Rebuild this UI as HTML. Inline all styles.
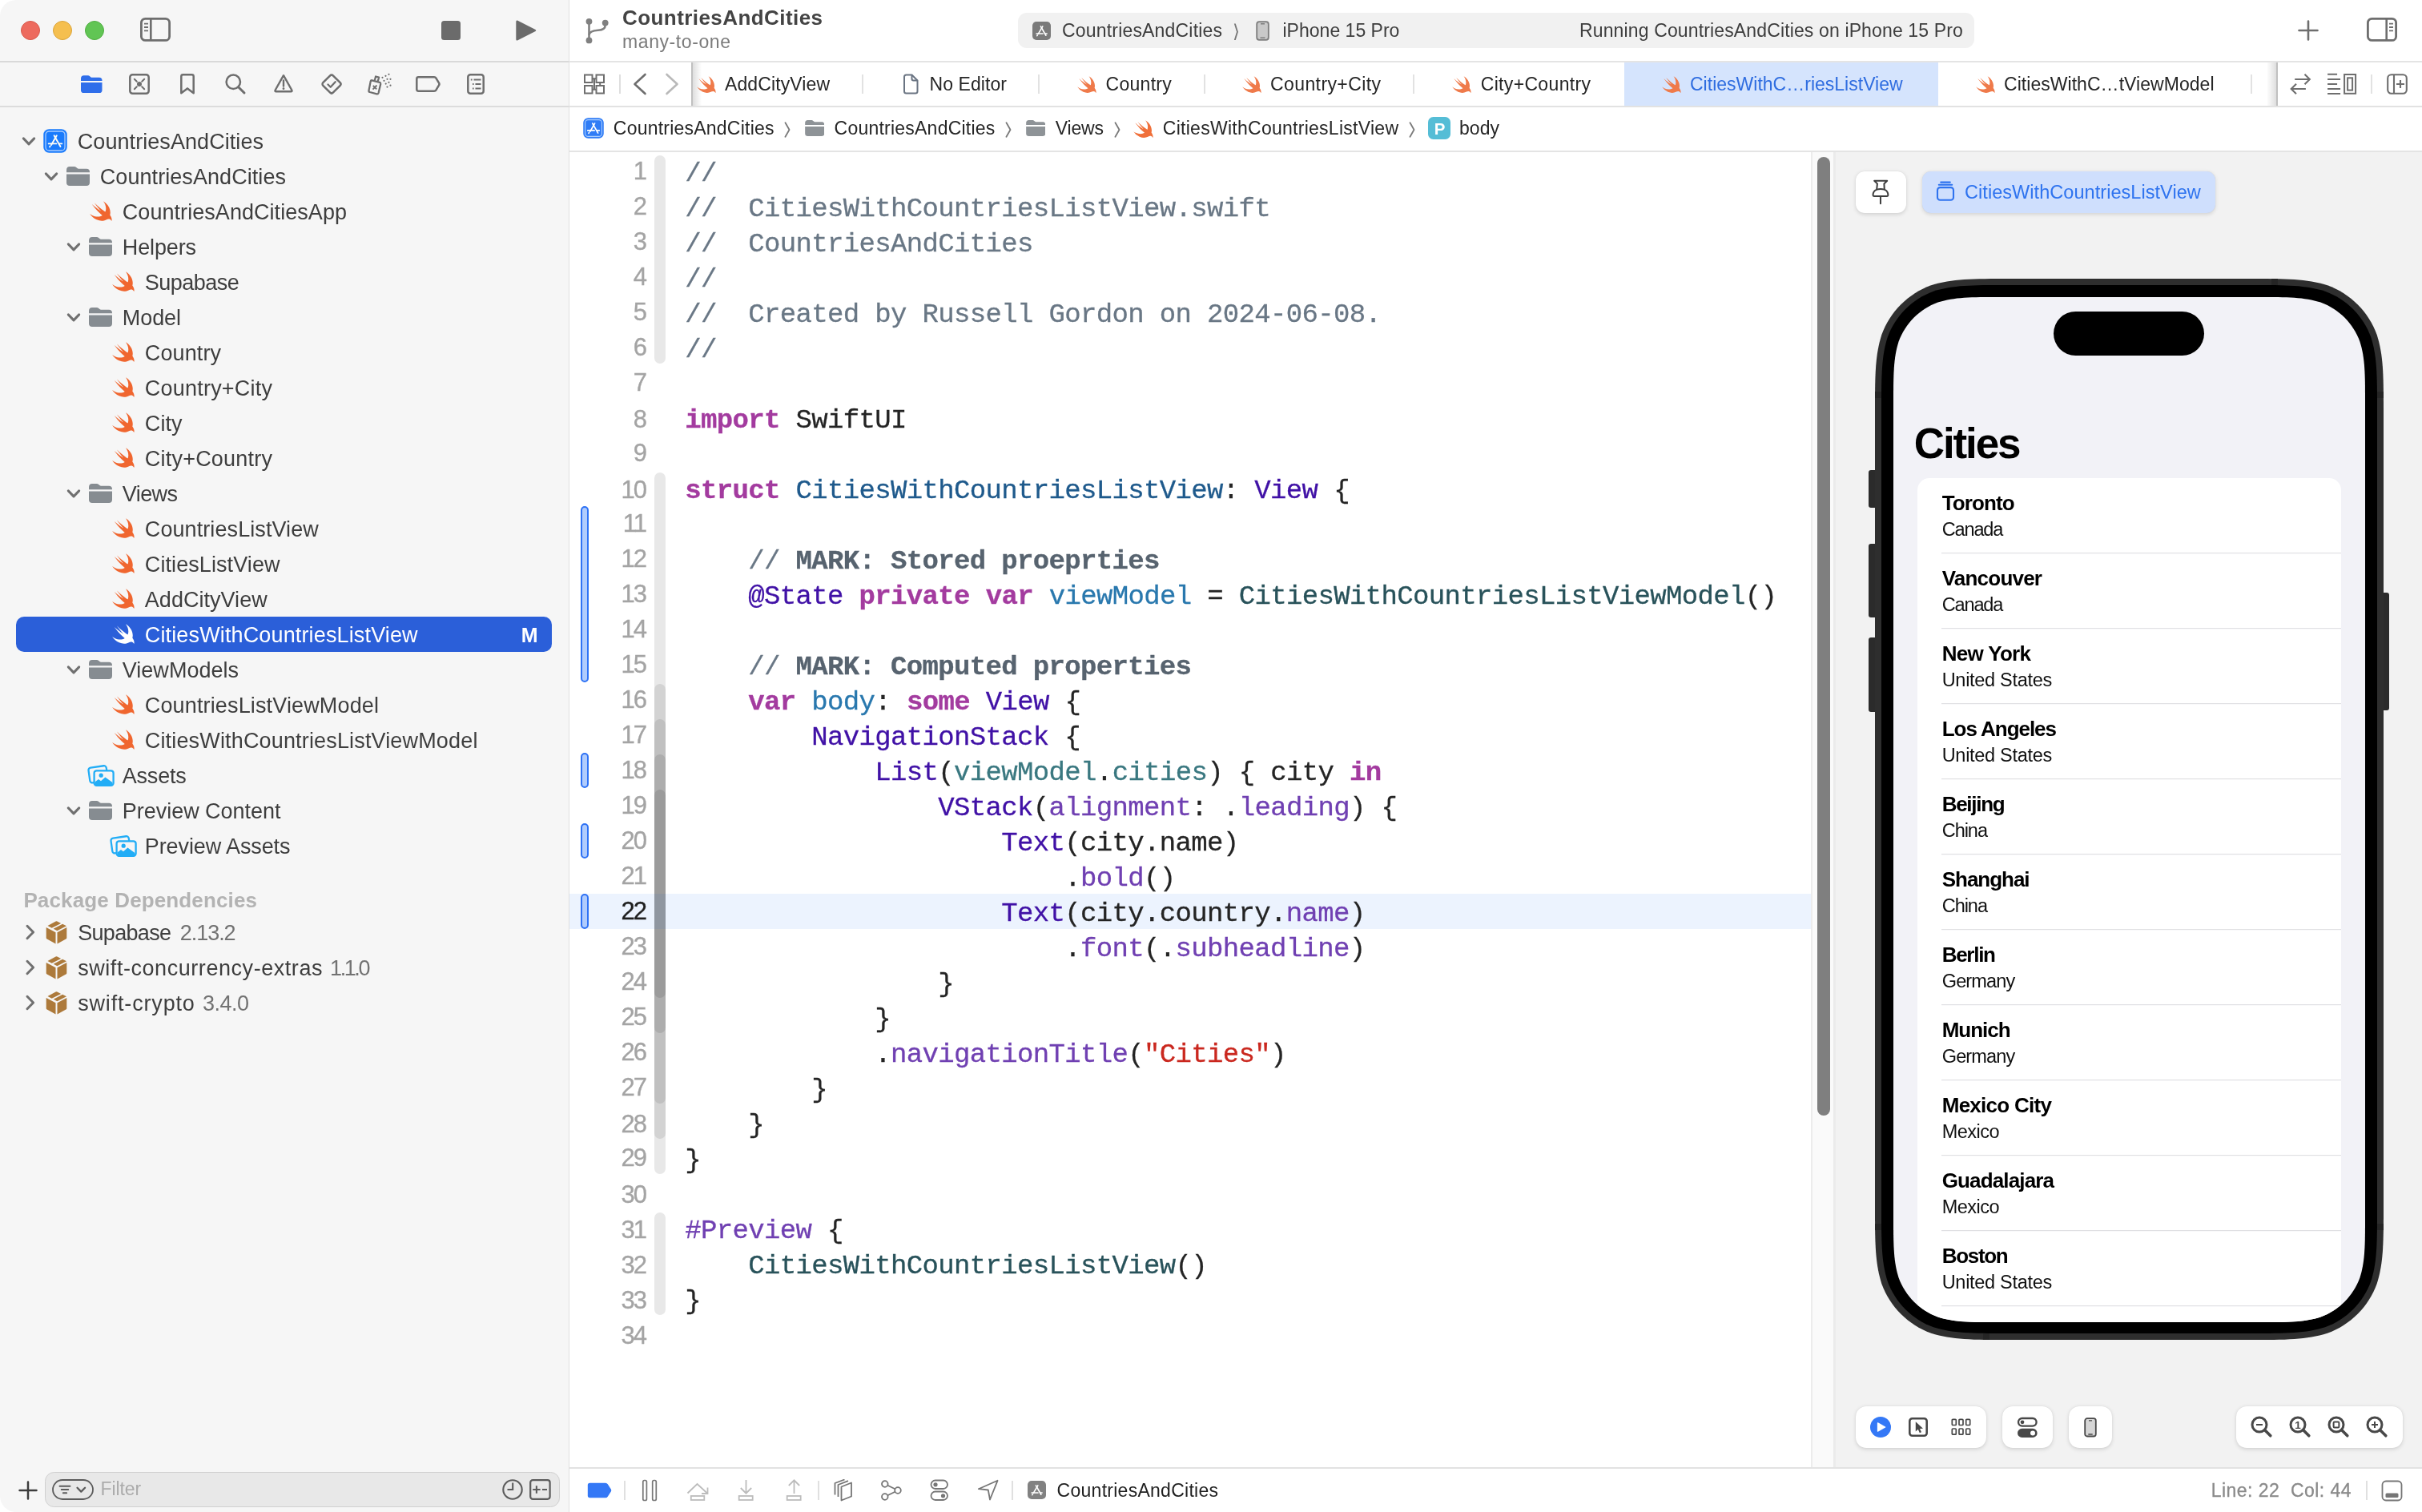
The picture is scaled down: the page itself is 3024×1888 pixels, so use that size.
<!DOCTYPE html>
<html lang="en"><head><meta charset="utf-8"><title>CountriesAndCities — CitiesWithCountriesListView.swift</title>
<style>
html,body{margin:0;padding:0;background:#fff;}
body{width:3024px;height:1888px;overflow:hidden;position:relative;font-family:"Liberation Sans",sans-serif;}
#app{position:absolute;left:0;top:0;width:3024px;height:1888px;overflow:hidden;will-change:transform;}
#app div,#app span,#app svg{position:absolute;box-sizing:border-box;}
#app span{white-space:pre;display:block;}
</style></head><body><div id="app">
<div style="left:0px;top:0px;width:711px;height:1888px;background:#f6f6f6;border-radius:20px 0 0 20px;"></div>
<div style="left:710px;top:0px;width:1px;height:1888px;background:#dfdfdf;"></div>
<div style="left:711px;top:0px;width:2313px;height:1888px;background:#ffffff;"></div>
<div style="left:0px;top:76px;width:710px;height:2px;background:#d9d9d9;"></div>
<div style="left:711px;top:76px;width:2313px;height:2px;background:#e4e4e4;"></div>
<div style="left:0px;top:132px;width:710px;height:2px;background:#dcdcdc;"></div>
<div style="left:26px;top:26px;width:24px;height:24px;background:#ed6a5e;border-radius:50%;border:1px solid #d8594c;"></div>
<div style="left:66px;top:26px;width:24px;height:24px;background:#f5bf4f;border-radius:50%;border:1px solid #dba43a;"></div>
<div style="left:106px;top:26px;width:24px;height:24px;background:#61c554;border-radius:50%;border:1px solid #4fae41;"></div>
<svg style="left:174px;top:21px;" width="40" height="32" viewBox="0 0 40 32"><rect x="2.4" y="2.4" width="35.2" height="27" rx="5" fill="none" stroke="#6e6e6e" stroke-width="2.8"/><path d="M14.3 2.4v27" stroke="#6e6e6e" stroke-width="2.6"/><path d="M6 8.6h5M6 13h5M6 17.4h5" stroke="#6e6e6e" stroke-width="1.8"/></svg>
<div style="left:551px;top:26px;width:24px;height:24px;background:#6b6b6b;border-radius:3.5px;"></div>
<svg style="left:642px;top:22px;" width="32" height="32" viewBox="0 0 32 32"><path d="M4 3.6 L26.6 15 Q28 16 26.6 17 L4 28.4 Q2.3 29 2.3 27 L2.3 5 Q2.3 3 4 3.6Z" fill="#6b6b6b"/></svg>
<svg style="left:729px;top:20px;" width="34" height="38" viewBox="0 0 34 38"><g fill="none" stroke="#808080" stroke-width="2.600"><path d="M6.500 7v24"/><path d="M26.7 9v2.5c0 5-4 6-9 6.3-6 .4-11 1.3-11.2 6"/></g><circle cx="6.5" cy="6.8" r="3.9" fill="#808080"/><circle cx="26.7" cy="8.6" r="3.9" fill="#808080"/><circle cx="6.5" cy="30.4" r="3.9" fill="#808080"/></svg>
<span style="left:777.00px;top:9.00px;font-size:26px;line-height:26px;color:#444444;letter-spacing:0.430px;font-weight:700;">CountriesAndCities</span>
<span style="left:777.00px;top:41.00px;font-size:23px;line-height:23px;color:#7b7b7b;letter-spacing:0.588px;">many-to-one</span>
<div style="left:1271px;top:16px;width:1194px;height:44px;background:#f1f1f1;border-radius:11px;"></div>
<svg style="left:1289px;top:27px;" width="23" height="23" viewBox="0 0 24 24"><rect width="24" height="24" rx="5.28" fill="#7a7a7a"/><g stroke="#ffffff" stroke-width="1.7" stroke-linecap="round" fill="none"><path d="M13.4 6.2 L7.6 16"/><path d="M10.8 6.2 L17.6 18"/><path d="M5.3 15.6h8.3M16.3 15.6h2.6"/><path d="M6.6 17.6l-.5 .9"/></g></svg>
<span style="left:1326.00px;top:27.00px;font-size:23px;line-height:23px;color:#3d3d3d;letter-spacing:0.184px;">CountriesAndCities</span>
<span style="left:1539.00px;top:28.00px;font-size:23px;line-height:23px;color:#777777;">⟩</span>
<svg style="left:1568px;top:26px;" width="17" height="25" viewBox="0 0 17 25"><rect x="1.2" y="1.2" width="14.6" height="22.6" rx="3" fill="#c9c9c9" stroke="#7d7d7d" stroke-width="1.8"/><path d="M6 3.7h5M5.5 21.3h6" stroke="#7d7d7d" stroke-width="1.5"/></svg>
<span style="left:1601.50px;top:27.00px;font-size:23px;line-height:23px;color:#3d3d3d;letter-spacing:0.011px;">iPhone 15 Pro</span>
<span style="left:1972.00px;top:27.00px;font-size:23px;line-height:23px;color:#3d3d3d;letter-spacing:0.136px;">Running CountriesAndCities on iPhone 15 Pro</span>
<svg style="left:2868px;top:24px;" width="28" height="28" viewBox="0 0 28 28"><path d="M14 2.5v23M2.5 14h23" stroke="#6e6e6e" stroke-width="2.6" stroke-linecap="round"/></svg>
<svg style="left:2954px;top:21px;" width="40" height="32" viewBox="0 0 40 32"><rect x="2.4" y="2.4" width="35.2" height="27" rx="5" fill="none" stroke="#6e6e6e" stroke-width="2.8"/><path d="M25.7 2.4v27" stroke="#6e6e6e" stroke-width="2.6"/><path d="M29 8.6h5M29 13h5M29 17.4h5" stroke="#6e6e6e" stroke-width="1.8"/></svg>
<svg style="left:101px;top:93.5px;" width="26.5" height="22.5" viewBox="0 0 29 24"><path fill="#2f6eea" d="M0 4.2C0 1.6 1.5 0 4 0h5.2c1.3 0 2 .3 3 1.1l1.2 1c.7.5 1.2.7 2.2.7H25c2.6 0 4 1.500 4 4V7.300H0Z"/><path fill="#2f6eea" d="M0 9.6h29V20c0 2.600-1.500 4-4 4H4c-2.500 0-4-1.400-4-4Z"/></svg>
<svg style="left:160px;top:91px;" width="28" height="28" viewBox="0 0 28 28"><rect x="2.3" y="2.3" width="23.400" height="23.400" rx="3.2" fill="none" stroke="#6e6e6e" stroke-width="2.5"/><circle cx="14" cy="14" r="3" fill="#6e6e6e"/><path d="M7.800 7.800l3 3M20.200 7.800l-3 3M7.800 20.200l3-3M20.200 20.200l-3-3" stroke="#6e6e6e" stroke-width="2" stroke-linecap="round"/></svg>
<svg style="left:224px;top:91px;" width="20" height="28" viewBox="0 0 20 28"><path d="M2.300 4.500q0-2.200 2.200-2.200h11q2.200 0 2.200 2.200v20.700L10 19.400 2.300 25.200Z" fill="none" stroke="#6e6e6e" stroke-width="2.500" stroke-linejoin="round"/></svg>
<svg style="left:280px;top:91px;" width="28" height="28" viewBox="0 0 28 28"><circle cx="11.300" cy="11.300" r="8.700" fill="none" stroke="#6e6e6e" stroke-width="2.500"/><path d="M17.700 17.700l7.300 7.300" stroke="#6e6e6e" stroke-width="3" stroke-linecap="round"/></svg>
<svg style="left:341px;top:91px;" width="26" height="26" viewBox="0 0 26 26"><path d="M13 3.200 23.300 21.500q.8 1.800-1 1.800H3.700q-1.800 0-1-1.800Z" fill="none" stroke="#6e6e6e" stroke-width="2.400" stroke-linejoin="round"/><path d="M13 9.500v7" stroke="#6e6e6e" stroke-width="2.400" stroke-linecap="round"/><circle cx="13" cy="19.700" r="1.400" fill="#6e6e6e"/></svg>
<svg style="left:400px;top:91px;" width="28" height="28" viewBox="0 0 28 28"><rect x="5.200" y="5.200" width="17.600" height="17.600" rx="2.500" transform="rotate(45 14 14)" fill="none" stroke="#6e6e6e" stroke-width="2.500"/><path d="M9.500 14.500l3.200 3.200 6-6.500" fill="none" stroke="#6e6e6e" stroke-width="2.300" stroke-linecap="round" stroke-linejoin="round"/></svg>
<svg style="left:458px;top:90px;" width="32" height="30" viewBox="0 0 32 30"><g fill="none" stroke="#6e6e6e" stroke-width="2.300" stroke-linejoin="round"><path d="M6.500 10.300l9.500 2.500q1.500.6 1.200 2.200L14.600 26q-.5 1.600-2.100 1.300L3.700 25q-1.500-.5-1.200-2.100L4.700 11.600q.4-1.500 1.800-1.300Z"/><path d="M9.800 10.500l1.300-5 4 1-1.300 5"/><path d="M7.800 16.800l4.400 4.600M12.500 16.500l-5 5.200" stroke-width="1.900"/></g><g fill="#6e6e6e"><circle cx="19.500" cy="6.800" r="1.100"/><circle cx="23.500" cy="4.800" r="1.100"/><circle cx="27.500" cy="2.800" r="1.100"/><circle cx="21.500" cy="10.800" r="1.100"/><circle cx="25.500" cy="8.800" r="1.100"/><circle cx="29.500" cy="8.800" r="1.100"/><circle cx="23.700" cy="14.600" r="1.100"/><circle cx="27.500" cy="12.800" r="1.100"/><circle cx="25.500" cy="18.600" r="1.100"/><circle cx="29.500" cy="16.700" r="1.100"/></g></svg>
<svg style="left:518px;top:94px;" width="32" height="22" viewBox="0 0 32 22"><path d="M4.500 2.300h19.500q1.600 0 2.600 1.500l3.600 6q.6 1.200 0 2.400l-3.600 6q-1 1.500-2.600 1.500H4.500q-2.200 0-2.200-2.200v-13q0-2.200 2.200-2.200Z" fill="none" stroke="#6e6e6e" stroke-width="2.500" stroke-linejoin="round"/></svg>
<svg style="left:582px;top:91px;" width="24" height="28" viewBox="0 0 24 28"><rect x="2.300" y="2.300" width="19.400" height="23.400" rx="3" fill="none" stroke="#6e6e6e" stroke-width="2.500"/><path d="M9.500 8.500h9M11.500 14h7M11.500 19.500h7" stroke="#6e6e6e" stroke-width="2.100"/><path d="M5.800 8.500h1.800M8 14h1.600M8 19.500h1.600" stroke="#6e6e6e" stroke-width="2.100"/></svg>
<svg style="left:26px;top:169.8px;" width="20" height="14" viewBox="0 0 20 14"><path d="M3.300 2.900 10 9.900 16.700 2.900" fill="none" stroke="#707070" stroke-width="3" stroke-linecap="round" stroke-linejoin="round"/></svg>
<svg style="left:54px;top:161px;" width="30" height="30" viewBox="0 0 30 30"><rect x=".3" y=".3" width="29.400" height="29.400" rx="7" fill="#1a7bfc"/><rect x="3" y="3" width="24" height="24" rx="4.300" fill="none" stroke="#a9cdfe" stroke-width="1.300"/><g stroke="#fffdf5" stroke-width="1.900" stroke-linecap="round" fill="none"><path d="M16.800 8.200 10 20"/><path d="M13.600 8.200 21.500 22"/><path d="M6.700 18.400h9.600M20 18.400h3.300"/><path d="M8.600 21.500l-.5.900"/></g></svg>
<span style="left:96.80px;top:164.00px;font-size:27px;line-height:27px;color:#3e3e3e;letter-spacing:0.064px;">CountriesAndCities</span>
<svg style="left:54px;top:213.8px;" width="20" height="14" viewBox="0 0 20 14"><path d="M3.300 2.900 10 9.900 16.700 2.900" fill="none" stroke="#707070" stroke-width="3" stroke-linecap="round" stroke-linejoin="round"/></svg>
<svg style="left:83px;top:208px;" width="29" height="24" viewBox="0 0 29 24"><path fill="#868c91" d="M0 4.2C0 1.6 1.5 0 4 0h5.2c1.3 0 2 .3 3 1.1l1.2 1c.7.5 1.2.7 2.2.7H25c2.6 0 4 1.500 4 4V7.300H0Z"/><path fill="#868c91" d="M0 9.6h29V20c0 2.600-1.500 4-4 4H4c-2.500 0-4-1.400-4-4Z"/></svg>
<span style="left:124.80px;top:208.00px;font-size:27px;line-height:27px;color:#3e3e3e;letter-spacing:0.064px;">CountriesAndCities</span>
<svg style="left:111.5px;top:250.5px;" width="28" height="25.5" viewBox="2.3 3.3 18.5 16.7"><path fill="#f0662f" d="M13.543 3.41c4.114 2.47 6.545 7.162 5.549 11.131-.024.093-.05.181-.076.272l.002.001c2.062 2.538 1.5 5.258 1.236 4.745-1.072-2.086-3.066-1.568-4.088-1.043a6.803 6.803 0 0 1-.281.158l-.02.012-.002.002c-2.115 1.123-4.957 1.205-7.812-.022a12.568 12.568 0 0 1-5.64-4.838c.649.48 1.35.902 2.097 1.252 3.019 1.414 6.051 1.311 8.197-.002C9.651 12.73 7.101 9.67 5.146 7.191a10.628 10.628 0 0 1-1.005-1.384c2.34 2.142 6.038 4.83 7.365 5.576C8.69 8.408 6.208 4.743 6.324 4.86c4.436 4.47 8.528 6.996 8.528 6.996.154.085.27.154.36.213.085-.215.16-.437.224-.668.708-2.588-.09-5.548-1.893-7.992z"/></svg>
<span style="left:152.80px;top:252.00px;font-size:27px;line-height:27px;color:#3e3e3e;letter-spacing:0.052px;">CountriesAndCitiesApp</span>
<svg style="left:82px;top:301.8px;" width="20" height="14" viewBox="0 0 20 14"><path d="M3.300 2.900 10 9.900 16.700 2.900" fill="none" stroke="#707070" stroke-width="3" stroke-linecap="round" stroke-linejoin="round"/></svg>
<svg style="left:111px;top:296px;" width="29" height="24" viewBox="0 0 29 24"><path fill="#868c91" d="M0 4.2C0 1.6 1.5 0 4 0h5.2c1.3 0 2 .3 3 1.1l1.2 1c.7.5 1.2.7 2.2.7H25c2.6 0 4 1.500 4 4V7.300H0Z"/><path fill="#868c91" d="M0 9.6h29V20c0 2.600-1.500 4-4 4H4c-2.500 0-4-1.400-4-4Z"/></svg>
<span style="left:152.80px;top:296.00px;font-size:27px;line-height:27px;color:#3e3e3e;letter-spacing:-0.140px;">Helpers</span>
<svg style="left:139.5px;top:338.5px;" width="28" height="25.5" viewBox="2.3 3.3 18.5 16.7"><path fill="#f0662f" d="M13.543 3.41c4.114 2.47 6.545 7.162 5.549 11.131-.024.093-.05.181-.076.272l.002.001c2.062 2.538 1.5 5.258 1.236 4.745-1.072-2.086-3.066-1.568-4.088-1.043a6.803 6.803 0 0 1-.281.158l-.02.012-.002.002c-2.115 1.123-4.957 1.205-7.812-.022a12.568 12.568 0 0 1-5.64-4.838c.649.48 1.35.902 2.097 1.252 3.019 1.414 6.051 1.311 8.197-.002C9.651 12.73 7.101 9.67 5.146 7.191a10.628 10.628 0 0 1-1.005-1.384c2.34 2.142 6.038 4.83 7.365 5.576C8.69 8.408 6.208 4.743 6.324 4.86c4.436 4.47 8.528 6.996 8.528 6.996.154.085.27.154.36.213.085-.215.16-.437.224-.668.708-2.588-.09-5.548-1.893-7.992z"/></svg>
<span style="left:180.80px;top:340.00px;font-size:27px;line-height:27px;color:#3e3e3e;letter-spacing:-0.529px;">Supabase</span>
<svg style="left:82px;top:389.8px;" width="20" height="14" viewBox="0 0 20 14"><path d="M3.300 2.900 10 9.900 16.700 2.900" fill="none" stroke="#707070" stroke-width="3" stroke-linecap="round" stroke-linejoin="round"/></svg>
<svg style="left:111px;top:384px;" width="29" height="24" viewBox="0 0 29 24"><path fill="#868c91" d="M0 4.2C0 1.6 1.5 0 4 0h5.2c1.3 0 2 .3 3 1.1l1.2 1c.7.5 1.2.7 2.2.7H25c2.6 0 4 1.500 4 4V7.300H0Z"/><path fill="#868c91" d="M0 9.6h29V20c0 2.600-1.500 4-4 4H4c-2.500 0-4-1.400-4-4Z"/></svg>
<span style="left:152.80px;top:384.00px;font-size:27px;line-height:27px;color:#3e3e3e;letter-spacing:-0.085px;">Model</span>
<svg style="left:139.5px;top:426.5px;" width="28" height="25.5" viewBox="2.3 3.3 18.5 16.7"><path fill="#f0662f" d="M13.543 3.41c4.114 2.47 6.545 7.162 5.549 11.131-.024.093-.05.181-.076.272l.002.001c2.062 2.538 1.5 5.258 1.236 4.745-1.072-2.086-3.066-1.568-4.088-1.043a6.803 6.803 0 0 1-.281.158l-.02.012-.002.002c-2.115 1.123-4.957 1.205-7.812-.022a12.568 12.568 0 0 1-5.64-4.838c.649.48 1.35.902 2.097 1.252 3.019 1.414 6.051 1.311 8.197-.002C9.651 12.73 7.101 9.67 5.146 7.191a10.628 10.628 0 0 1-1.005-1.384c2.34 2.142 6.038 4.83 7.365 5.576C8.69 8.408 6.208 4.743 6.324 4.86c4.436 4.47 8.528 6.996 8.528 6.996.154.085.27.154.36.213.085-.215.16-.437.224-.668.708-2.588-.09-5.548-1.893-7.992z"/></svg>
<span style="left:180.80px;top:428.00px;font-size:27px;line-height:27px;color:#3e3e3e;letter-spacing:0.110px;">Country</span>
<svg style="left:139.5px;top:470.5px;" width="28" height="25.5" viewBox="2.3 3.3 18.5 16.7"><path fill="#f0662f" d="M13.543 3.41c4.114 2.47 6.545 7.162 5.549 11.131-.024.093-.05.181-.076.272l.002.001c2.062 2.538 1.5 5.258 1.236 4.745-1.072-2.086-3.066-1.568-4.088-1.043a6.803 6.803 0 0 1-.281.158l-.02.012-.002.002c-2.115 1.123-4.957 1.205-7.812-.022a12.568 12.568 0 0 1-5.64-4.838c.649.48 1.35.902 2.097 1.252 3.019 1.414 6.051 1.311 8.197-.002C9.651 12.73 7.101 9.67 5.146 7.191a10.628 10.628 0 0 1-1.005-1.384c2.34 2.142 6.038 4.83 7.365 5.576C8.69 8.408 6.208 4.743 6.324 4.86c4.436 4.47 8.528 6.996 8.528 6.996.154.085.27.154.36.213.085-.215.16-.437.224-.668.708-2.588-.09-5.548-1.893-7.992z"/></svg>
<span style="left:180.80px;top:472.00px;font-size:27px;line-height:27px;color:#3e3e3e;letter-spacing:0.218px;">Country+City</span>
<svg style="left:139.5px;top:514.5px;" width="28" height="25.5" viewBox="2.3 3.3 18.5 16.7"><path fill="#f0662f" d="M13.543 3.41c4.114 2.47 6.545 7.162 5.549 11.131-.024.093-.05.181-.076.272l.002.001c2.062 2.538 1.5 5.258 1.236 4.745-1.072-2.086-3.066-1.568-4.088-1.043a6.803 6.803 0 0 1-.281.158l-.02.012-.002.002c-2.115 1.123-4.957 1.205-7.812-.022a12.568 12.568 0 0 1-5.64-4.838c.649.48 1.35.902 2.097 1.252 3.019 1.414 6.051 1.311 8.197-.002C9.651 12.73 7.101 9.67 5.146 7.191a10.628 10.628 0 0 1-1.005-1.384c2.34 2.142 6.038 4.83 7.365 5.576C8.69 8.408 6.208 4.743 6.324 4.86c4.436 4.47 8.528 6.996 8.528 6.996.154.085.27.154.36.213.085-.215.16-.437.224-.668.708-2.588-.09-5.548-1.893-7.992z"/></svg>
<span style="left:180.80px;top:516.00px;font-size:27px;line-height:27px;color:#3e3e3e;letter-spacing:0.100px;">City</span>
<svg style="left:139.5px;top:558.5px;" width="28" height="25.5" viewBox="2.3 3.3 18.5 16.7"><path fill="#f0662f" d="M13.543 3.41c4.114 2.47 6.545 7.162 5.549 11.131-.024.093-.05.181-.076.272l.002.001c2.062 2.538 1.5 5.258 1.236 4.745-1.072-2.086-3.066-1.568-4.088-1.043a6.803 6.803 0 0 1-.281.158l-.02.012-.002.002c-2.115 1.123-4.957 1.205-7.812-.022a12.568 12.568 0 0 1-5.64-4.838c.649.48 1.35.902 2.097 1.252 3.019 1.414 6.051 1.311 8.197-.002C9.651 12.73 7.101 9.67 5.146 7.191a10.628 10.628 0 0 1-1.005-1.384c2.34 2.142 6.038 4.83 7.365 5.576C8.69 8.408 6.208 4.743 6.324 4.86c4.436 4.47 8.528 6.996 8.528 6.996.154.085.27.154.36.213.085-.215.16-.437.224-.668.708-2.588-.09-5.548-1.893-7.992z"/></svg>
<span style="left:180.80px;top:560.00px;font-size:27px;line-height:27px;color:#3e3e3e;letter-spacing:0.218px;">City+Country</span>
<svg style="left:82px;top:609.8px;" width="20" height="14" viewBox="0 0 20 14"><path d="M3.300 2.900 10 9.900 16.700 2.900" fill="none" stroke="#707070" stroke-width="3" stroke-linecap="round" stroke-linejoin="round"/></svg>
<svg style="left:111px;top:604px;" width="29" height="24" viewBox="0 0 29 24"><path fill="#868c91" d="M0 4.2C0 1.6 1.5 0 4 0h5.2c1.3 0 2 .3 3 1.1l1.2 1c.7.5 1.2.7 2.2.7H25c2.6 0 4 1.500 4 4V7.300H0Z"/><path fill="#868c91" d="M0 9.6h29V20c0 2.600-1.500 4-4 4H4c-2.500 0-4-1.400-4-4Z"/></svg>
<span style="left:152.80px;top:604.00px;font-size:27px;line-height:27px;color:#3e3e3e;letter-spacing:-0.584px;">Views</span>
<svg style="left:139.5px;top:646.5px;" width="28" height="25.5" viewBox="2.3 3.3 18.5 16.7"><path fill="#f0662f" d="M13.543 3.41c4.114 2.47 6.545 7.162 5.549 11.131-.024.093-.05.181-.076.272l.002.001c2.062 2.538 1.5 5.258 1.236 4.745-1.072-2.086-3.066-1.568-4.088-1.043a6.803 6.803 0 0 1-.281.158l-.02.012-.002.002c-2.115 1.123-4.957 1.205-7.812-.022a12.568 12.568 0 0 1-5.64-4.838c.649.48 1.35.902 2.097 1.252 3.019 1.414 6.051 1.311 8.197-.002C9.651 12.73 7.101 9.67 5.146 7.191a10.628 10.628 0 0 1-1.005-1.384c2.34 2.142 6.038 4.83 7.365 5.576C8.69 8.408 6.208 4.743 6.324 4.86c4.436 4.47 8.528 6.996 8.528 6.996.154.085.27.154.36.213.085-.215.16-.437.224-.668.708-2.588-.09-5.548-1.893-7.992z"/></svg>
<span style="left:180.80px;top:648.00px;font-size:27px;line-height:27px;color:#3e3e3e;letter-spacing:0.087px;">CountriesListView</span>
<svg style="left:139.5px;top:690.5px;" width="28" height="25.5" viewBox="2.3 3.3 18.5 16.7"><path fill="#f0662f" d="M13.543 3.41c4.114 2.47 6.545 7.162 5.549 11.131-.024.093-.05.181-.076.272l.002.001c2.062 2.538 1.5 5.258 1.236 4.745-1.072-2.086-3.066-1.568-4.088-1.043a6.803 6.803 0 0 1-.281.158l-.02.012-.002.002c-2.115 1.123-4.957 1.205-7.812-.022a12.568 12.568 0 0 1-5.64-4.838c.649.48 1.35.902 2.097 1.252 3.019 1.414 6.051 1.311 8.197-.002C9.651 12.73 7.101 9.67 5.146 7.191a10.628 10.628 0 0 1-1.005-1.384c2.34 2.142 6.038 4.83 7.365 5.576C8.69 8.408 6.208 4.743 6.324 4.86c4.436 4.47 8.528 6.996 8.528 6.996.154.085.27.154.36.213.085-.215.16-.437.224-.668.708-2.588-.09-5.548-1.893-7.992z"/></svg>
<span style="left:180.80px;top:692.00px;font-size:27px;line-height:27px;color:#3e3e3e;letter-spacing:0.087px;">CitiesListView</span>
<svg style="left:139.5px;top:734.5px;" width="28" height="25.5" viewBox="2.3 3.3 18.5 16.7"><path fill="#f0662f" d="M13.543 3.41c4.114 2.47 6.545 7.162 5.549 11.131-.024.093-.05.181-.076.272l.002.001c2.062 2.538 1.5 5.258 1.236 4.745-1.072-2.086-3.066-1.568-4.088-1.043a6.803 6.803 0 0 1-.281.158l-.02.012-.002.002c-2.115 1.123-4.957 1.205-7.812-.022a12.568 12.568 0 0 1-5.64-4.838c.649.48 1.35.902 2.097 1.252 3.019 1.414 6.051 1.311 8.197-.002C9.651 12.73 7.101 9.67 5.146 7.191a10.628 10.628 0 0 1-1.005-1.384c2.34 2.142 6.038 4.83 7.365 5.576C8.69 8.408 6.208 4.743 6.324 4.86c4.436 4.47 8.528 6.996 8.528 6.996.154.085.27.154.36.213.085-.215.16-.437.224-.668.708-2.588-.09-5.548-1.893-7.992z"/></svg>
<span style="left:180.80px;top:736.00px;font-size:27px;line-height:27px;color:#3e3e3e;letter-spacing:0.033px;">AddCityView</span>
<div style="left:20px;top:770px;width:669px;height:44px;background:#2b5fd9;border-radius:10px;"></div>
<svg style="left:139.5px;top:778.5px;" width="28" height="25.5" viewBox="2.3 3.3 18.5 16.7"><path fill="#ffffff" d="M13.543 3.41c4.114 2.47 6.545 7.162 5.549 11.131-.024.093-.05.181-.076.272l.002.001c2.062 2.538 1.5 5.258 1.236 4.745-1.072-2.086-3.066-1.568-4.088-1.043a6.803 6.803 0 0 1-.281.158l-.02.012-.002.002c-2.115 1.123-4.957 1.205-7.812-.022a12.568 12.568 0 0 1-5.64-4.838c.649.48 1.35.902 2.097 1.252 3.019 1.414 6.051 1.311 8.197-.002C9.651 12.73 7.101 9.67 5.146 7.191a10.628 10.628 0 0 1-1.005-1.384c2.34 2.142 6.038 4.83 7.365 5.576C8.69 8.408 6.208 4.743 6.324 4.86c4.436 4.47 8.528 6.996 8.528 6.996.154.085.27.154.36.213.085-.215.16-.437.224-.668.708-2.588-.09-5.548-1.893-7.992z"/></svg>
<span style="left:180.80px;top:780.00px;font-size:27px;line-height:27px;color:#ffffff;letter-spacing:0.142px;">CitiesWithCountriesListView</span>
<svg style="left:82px;top:829.8px;" width="20" height="14" viewBox="0 0 20 14"><path d="M3.300 2.900 10 9.900 16.700 2.900" fill="none" stroke="#707070" stroke-width="3" stroke-linecap="round" stroke-linejoin="round"/></svg>
<svg style="left:111px;top:824px;" width="29" height="24" viewBox="0 0 29 24"><path fill="#868c91" d="M0 4.2C0 1.6 1.5 0 4 0h5.2c1.3 0 2 .3 3 1.1l1.2 1c.7.5 1.2.7 2.2.7H25c2.6 0 4 1.500 4 4V7.300H0Z"/><path fill="#868c91" d="M0 9.6h29V20c0 2.600-1.500 4-4 4H4c-2.500 0-4-1.400-4-4Z"/></svg>
<span style="left:152.80px;top:824.00px;font-size:27px;line-height:27px;color:#3e3e3e;letter-spacing:0.014px;">ViewModels</span>
<svg style="left:139.5px;top:866.5px;" width="28" height="25.5" viewBox="2.3 3.3 18.5 16.7"><path fill="#f0662f" d="M13.543 3.41c4.114 2.47 6.545 7.162 5.549 11.131-.024.093-.05.181-.076.272l.002.001c2.062 2.538 1.5 5.258 1.236 4.745-1.072-2.086-3.066-1.568-4.088-1.043a6.803 6.803 0 0 1-.281.158l-.02.012-.002.002c-2.115 1.123-4.957 1.205-7.812-.022a12.568 12.568 0 0 1-5.64-4.838c.649.48 1.35.902 2.097 1.252 3.019 1.414 6.051 1.311 8.197-.002C9.651 12.73 7.101 9.67 5.146 7.191a10.628 10.628 0 0 1-1.005-1.384c2.34 2.142 6.038 4.83 7.365 5.576C8.69 8.408 6.208 4.743 6.324 4.86c4.436 4.47 8.528 6.996 8.528 6.996.154.085.27.154.36.213.085-.215.16-.437.224-.668.708-2.588-.09-5.548-1.893-7.992z"/></svg>
<span style="left:180.80px;top:868.00px;font-size:27px;line-height:27px;color:#3e3e3e;letter-spacing:0.145px;">CountriesListViewModel</span>
<svg style="left:139.5px;top:910.5px;" width="28" height="25.5" viewBox="2.3 3.3 18.5 16.7"><path fill="#f0662f" d="M13.543 3.41c4.114 2.47 6.545 7.162 5.549 11.131-.024.093-.05.181-.076.272l.002.001c2.062 2.538 1.5 5.258 1.236 4.745-1.072-2.086-3.066-1.568-4.088-1.043a6.803 6.803 0 0 1-.281.158l-.02.012-.002.002c-2.115 1.123-4.957 1.205-7.812-.022a12.568 12.568 0 0 1-5.64-4.838c.649.48 1.35.902 2.097 1.252 3.019 1.414 6.051 1.311 8.197-.002C9.651 12.73 7.101 9.67 5.146 7.191a10.628 10.628 0 0 1-1.005-1.384c2.34 2.142 6.038 4.83 7.365 5.576C8.69 8.408 6.208 4.743 6.324 4.86c4.436 4.47 8.528 6.996 8.528 6.996.154.085.27.154.36.213.085-.215.16-.437.224-.668.708-2.588-.09-5.548-1.893-7.992z"/></svg>
<span style="left:180.80px;top:912.00px;font-size:27px;line-height:27px;color:#3e3e3e;letter-spacing:0.159px;">CitiesWithCountriesListViewModel</span>
<svg style="left:109px;top:953.5px;" width="34" height="28" viewBox="0 0 34 28"><rect x="2.300" y="3.300" width="22.500" height="19" rx="3" transform="rotate(-8 13.500 12.800)" fill="none" stroke="#22adf6" stroke-width="2.300"/><rect x="8.600" y="8.300" width="24" height="18.500" rx="3" fill="#f6f6f6" stroke="#22adf6" stroke-width="2.300"/><circle cx="17.200" cy="14.200" r="2.600" fill="#22adf6"/><path d="M9.700 22.300l4.300-3.200 3 2.200 5.400-4.700 9 6.500v2q0 1.500-1.500 1.500H11.200q-1.500 0-1.500-1.500Z" fill="#22adf6"/></svg>
<span style="left:152.80px;top:956.00px;font-size:27px;line-height:27px;color:#3e3e3e;letter-spacing:-0.225px;">Assets</span>
<svg style="left:82px;top:1005.8px;" width="20" height="14" viewBox="0 0 20 14"><path d="M3.300 2.900 10 9.900 16.700 2.900" fill="none" stroke="#707070" stroke-width="3" stroke-linecap="round" stroke-linejoin="round"/></svg>
<svg style="left:111px;top:1000px;" width="29" height="24" viewBox="0 0 29 24"><path fill="#868c91" d="M0 4.2C0 1.6 1.5 0 4 0h5.2c1.3 0 2 .3 3 1.1l1.2 1c.7.5 1.2.7 2.2.7H25c2.6 0 4 1.500 4 4V7.300H0Z"/><path fill="#868c91" d="M0 9.6h29V20c0 2.600-1.500 4-4 4H4c-2.500 0-4-1.400-4-4Z"/></svg>
<span style="left:152.80px;top:1000.00px;font-size:27px;line-height:27px;color:#3e3e3e;letter-spacing:-0.028px;">Preview Content</span>
<svg style="left:137px;top:1041.5px;" width="34" height="28" viewBox="0 0 34 28"><rect x="2.300" y="3.300" width="22.500" height="19" rx="3" transform="rotate(-8 13.500 12.800)" fill="none" stroke="#22adf6" stroke-width="2.300"/><rect x="8.600" y="8.300" width="24" height="18.500" rx="3" fill="#f6f6f6" stroke="#22adf6" stroke-width="2.300"/><circle cx="17.200" cy="14.200" r="2.600" fill="#22adf6"/><path d="M9.700 22.300l4.300-3.200 3 2.200 5.400-4.700 9 6.500v2q0 1.500-1.500 1.500H11.200q-1.500 0-1.500-1.500Z" fill="#22adf6"/></svg>
<span style="left:180.80px;top:1044.00px;font-size:27px;line-height:27px;color:#3e3e3e;letter-spacing:-0.105px;">Preview Assets</span>
<span style="left:650.80px;top:781.00px;font-size:25px;line-height:25px;color:#ffffff;font-weight:700;">M</span>
<span style="left:29.40px;top:1111.00px;font-size:26px;line-height:26px;color:#b3b3b3;letter-spacing:0.135px;font-weight:700;">Package Dependencies</span>
<svg style="left:31px;top:1153.5px;" width="14" height="20" viewBox="0 0 14 20"><path d="M3 2.300 10.600 10 3 17.700" fill="none" stroke="#707070" stroke-width="3" stroke-linecap="round" stroke-linejoin="round"/></svg>
<svg style="left:56.5px;top:1149.5px;" width="27" height="29" viewBox="0 0 27 29"><path fill="#ad7a3b" d="M12.600.4q.9-.4 1.800 0L19.200 2.900 7.700 8.700 2.500 6Z"/><path fill="#ad7a3b" d="M21.100 3.800 26 6.300 14.400 12.200 9.700 9.700Z"/><path fill="#ad7a3b" d="M.700 8 12.500 14.200V28.500L1.700 22.600Q.700 22 .700 20.900Z"/><path fill="#ad7a3b" d="M26.300 8 14.500 14.200V28.500L25.300 22.600Q26.300 22 26.300 20.900Z"/></svg>
<span style="left:97.20px;top:1152.00px;font-size:27px;line-height:27px;color:#3e3e3e;letter-spacing:-0.687px;">Supabase</span>
<span style="left:224.80px;top:1152.00px;font-size:27px;line-height:27px;color:#727272;letter-spacing:-1.054px;">2.13.2</span>
<svg style="left:31px;top:1197.5px;" width="14" height="20" viewBox="0 0 14 20"><path d="M3 2.300 10.600 10 3 17.700" fill="none" stroke="#707070" stroke-width="3" stroke-linecap="round" stroke-linejoin="round"/></svg>
<svg style="left:56.5px;top:1193.5px;" width="27" height="29" viewBox="0 0 27 29"><path fill="#ad7a3b" d="M12.600.4q.9-.4 1.800 0L19.200 2.900 7.700 8.700 2.500 6Z"/><path fill="#ad7a3b" d="M21.100 3.800 26 6.300 14.400 12.200 9.700 9.700Z"/><path fill="#ad7a3b" d="M.700 8 12.500 14.200V28.500L1.700 22.600Q.700 22 .700 20.900Z"/><path fill="#ad7a3b" d="M26.300 8 14.500 14.200V28.500L25.300 22.600Q26.300 22 26.300 20.900Z"/></svg>
<span style="left:97.20px;top:1196.00px;font-size:27px;line-height:27px;color:#3e3e3e;letter-spacing:0.553px;">swift-concurrency-extras</span>
<span style="left:412.00px;top:1196.00px;font-size:27px;line-height:27px;color:#727272;letter-spacing:-2.388px;">1.1.0</span>
<svg style="left:31px;top:1241.5px;" width="14" height="20" viewBox="0 0 14 20"><path d="M3 2.300 10.600 10 3 17.700" fill="none" stroke="#707070" stroke-width="3" stroke-linecap="round" stroke-linejoin="round"/></svg>
<svg style="left:56.5px;top:1237.5px;" width="27" height="29" viewBox="0 0 27 29"><path fill="#ad7a3b" d="M12.600.4q.9-.4 1.800 0L19.200 2.900 7.700 8.700 2.500 6Z"/><path fill="#ad7a3b" d="M21.100 3.800 26 6.300 14.400 12.200 9.700 9.700Z"/><path fill="#ad7a3b" d="M.700 8 12.500 14.200V28.500L1.700 22.600Q.700 22 .700 20.900Z"/><path fill="#ad7a3b" d="M26.300 8 14.500 14.200V28.500L25.300 22.600Q26.300 22 26.300 20.900Z"/></svg>
<span style="left:97.20px;top:1240.00px;font-size:27px;line-height:27px;color:#3e3e3e;letter-spacing:0.835px;">swift-crypto</span>
<span style="left:253.00px;top:1240.00px;font-size:27px;line-height:27px;color:#727272;letter-spacing:-0.513px;">3.4.0</span>
<svg style="left:23px;top:1849px;" width="24" height="24" viewBox="0 0 24 24"><path d="M12 1.500v21M1.500 12h21" stroke="#3c3c3c" stroke-width="2.500" stroke-linecap="round"/></svg>
<div style="left:56px;top:1838px;width:643px;height:44px;background:#e8e8e8;border-radius:11.500px;border:1.500px solid #d0d0d0;"></div>
<svg style="left:65px;top:1847px;" width="52" height="26" viewBox="0 0 52 26"><rect x="1" y="1" width="50" height="24" rx="12" fill="none" stroke="#5c5c5c" stroke-width="1.800"/><path d="M9.500 8.700h13M11.700 13h8.600M13.800 17.300h4.400" stroke="#5c5c5c" stroke-width="1.900" stroke-linecap="round"/><path d="M31.500 10.800l4.800 4.800 4.800-4.800" fill="none" stroke="#5c5c5c" stroke-width="2.300" stroke-linecap="round" stroke-linejoin="round"/></svg>
<span style="left:125.60px;top:1848.00px;font-size:23px;line-height:23px;color:#ababab;letter-spacing:-0.122px;">Filter</span>
<svg style="left:627px;top:1847px;" width="26" height="26" viewBox="0 0 26 26"><circle cx="13" cy="13" r="11.700" fill="none" stroke="#5c5c5c" stroke-width="2.100"/><path d="M13.200 4.500V13H6.500" fill="none" stroke="#5c5c5c" stroke-width="2.100"/></svg>
<svg style="left:661px;top:1847px;" width="27" height="26" viewBox="0 0 27 26"><rect x="1.200" y="1.200" width="24.400" height="23.600" rx="3" fill="none" stroke="#5c5c5c" stroke-width="2.200"/><path d="M4.200 13h9.400M8.900 8.200v9.600M16 13h6" stroke="#5c5c5c" stroke-width="2.100"/></svg>
<div style="left:711px;top:132px;width:2313px;height:2px;background:#e2e2e2;"></div>
<svg style="left:728px;top:92px;" width="28" height="26" viewBox="0 0 28 26"><g fill="none" stroke="#6e6e6e" stroke-width="2"><rect x="2" y="1.500" width="9.500" height="9.500"/><rect x="16.500" y="1.500" width="9.500" height="9.500"/><rect x="2" y="15" width="9.500" height="9.500"/><rect x="16.500" y="15" width="9.500" height="9.500"/><path d="M11.500 6.200h5M21.200 11v4M11.500 19.700h5M16.500 6.200v0M14 6.200v13.500" /></g></svg>
<div style="left:773px;top:93px;width:2px;height:24px;background:#dedede;"></div>
<svg style="left:789px;top:91px;" width="20" height="28" viewBox="0 0 20 28"><path d="M16.500 2 3.500 14 16.500 26" fill="none" stroke="#6e6e6e" stroke-width="2.600" stroke-linecap="round" stroke-linejoin="round"/></svg>
<svg style="left:829px;top:91px;" width="20" height="28" viewBox="0 0 20 28"><path d="M3.500 2 16.500 14 3.500 26" fill="none" stroke="#b9b9b9" stroke-width="2.600" stroke-linecap="round" stroke-linejoin="round"/></svg>
<div style="left:863px;top:78px;width:2px;height:54px;background:#c0c0c0;"></div>
<div style="left:865px;top:78px;width:11px;height:54px;background:linear-gradient(90deg,rgba(0,0,0,.13),rgba(0,0,0,0));"></div>
<svg style="left:869.5px;top:94.7px;" width="24" height="21.5" viewBox="2.3 3.3 18.5 16.7"><path fill="#ef7a4a" d="M13.543 3.41c4.114 2.47 6.545 7.162 5.549 11.131-.024.093-.05.181-.076.272l.002.001c2.062 2.538 1.5 5.258 1.236 4.745-1.072-2.086-3.066-1.568-4.088-1.043a6.803 6.803 0 0 1-.281.158l-.02.012-.002.002c-2.115 1.123-4.957 1.205-7.812-.022a12.568 12.568 0 0 1-5.64-4.838c.649.48 1.35.902 2.097 1.252 3.019 1.414 6.051 1.311 8.197-.002C9.651 12.73 7.101 9.67 5.146 7.191a10.628 10.628 0 0 1-1.005-1.384c2.34 2.142 6.038 4.83 7.365 5.576C8.69 8.408 6.208 4.743 6.324 4.86c4.436 4.47 8.528 6.996 8.528 6.996.154.085.27.154.36.213.085-.215.16-.437.224-.668.708-2.588-.09-5.548-1.893-7.992z"/></svg>
<span style="left:905.00px;top:94.00px;font-size:23px;line-height:23px;color:#262626;letter-spacing:0.103px;">AddCityView</span>
<div style="left:1076px;top:93px;width:2px;height:24px;background:#e2e2e2;"></div>
<svg style="left:1127px;top:92px;" width="20" height="26" viewBox="0 0 20 26"><path d="M4.500 1.500h7l7 7v13.500q0 2.500-2.500 2.500H4.500q-2.500 0-2.500-2.500V4q0-2.500 2.500-2.500Z" fill="none" stroke="#6a7482" stroke-width="2" stroke-linejoin="round"/><path d="M11.500 1.500v5q0 2 2 2h5" fill="none" stroke="#6a7482" stroke-width="2"/></svg>
<span style="left:1160.60px;top:94.00px;font-size:23px;line-height:23px;color:#262626;letter-spacing:0.066px;">No Editor</span>
<div style="left:1296px;top:93px;width:2px;height:24px;background:#e2e2e2;"></div>
<svg style="left:1345.0px;top:94.7px;" width="24" height="21.5" viewBox="2.3 3.3 18.5 16.7"><path fill="#ef7a4a" d="M13.543 3.41c4.114 2.47 6.545 7.162 5.549 11.131-.024.093-.05.181-.076.272l.002.001c2.062 2.538 1.5 5.258 1.236 4.745-1.072-2.086-3.066-1.568-4.088-1.043a6.803 6.803 0 0 1-.281.158l-.02.012-.002.002c-2.115 1.123-4.957 1.205-7.812-.022a12.568 12.568 0 0 1-5.64-4.838c.649.48 1.35.902 2.097 1.252 3.019 1.414 6.051 1.311 8.197-.002C9.651 12.73 7.101 9.67 5.146 7.191a10.628 10.628 0 0 1-1.005-1.384c2.34 2.142 6.038 4.83 7.365 5.576C8.69 8.408 6.208 4.743 6.324 4.86c4.436 4.47 8.528 6.996 8.528 6.996.154.085.27.154.36.213.085-.215.16-.437.224-.668.708-2.588-.09-5.548-1.893-7.992z"/></svg>
<span style="left:1380.60px;top:94.00px;font-size:23px;line-height:23px;color:#262626;letter-spacing:0.278px;">Country</span>
<div style="left:1503px;top:93px;width:2px;height:24px;background:#e2e2e2;"></div>
<svg style="left:1551.0px;top:94.7px;" width="24" height="21.5" viewBox="2.3 3.3 18.5 16.7"><path fill="#ef7a4a" d="M13.543 3.41c4.114 2.47 6.545 7.162 5.549 11.131-.024.093-.05.181-.076.272l.002.001c2.062 2.538 1.5 5.258 1.236 4.745-1.072-2.086-3.066-1.568-4.088-1.043a6.803 6.803 0 0 1-.281.158l-.02.012-.002.002c-2.115 1.123-4.957 1.205-7.812-.022a12.568 12.568 0 0 1-5.64-4.838c.649.48 1.35.902 2.097 1.252 3.019 1.414 6.051 1.311 8.197-.002C9.651 12.73 7.101 9.67 5.146 7.191a10.628 10.628 0 0 1-1.005-1.384c2.34 2.142 6.038 4.83 7.365 5.576C8.69 8.408 6.208 4.743 6.324 4.86c4.436 4.47 8.528 6.996 8.528 6.996.154.085.27.154.36.213.085-.215.16-.437.224-.668.708-2.588-.09-5.548-1.893-7.992z"/></svg>
<span style="left:1586.00px;top:94.00px;font-size:23px;line-height:23px;color:#262626;letter-spacing:0.402px;">Country+City</span>
<div style="left:1764px;top:93px;width:2px;height:24px;background:#e2e2e2;"></div>
<svg style="left:1813.0px;top:94.7px;" width="24" height="21.5" viewBox="2.3 3.3 18.5 16.7"><path fill="#ef7a4a" d="M13.543 3.41c4.114 2.47 6.545 7.162 5.549 11.131-.024.093-.05.181-.076.272l.002.001c2.062 2.538 1.5 5.258 1.236 4.745-1.072-2.086-3.066-1.568-4.088-1.043a6.803 6.803 0 0 1-.281.158l-.02.012-.002.002c-2.115 1.123-4.957 1.205-7.812-.022a12.568 12.568 0 0 1-5.64-4.838c.649.48 1.35.902 2.097 1.252 3.019 1.414 6.051 1.311 8.197-.002C9.651 12.73 7.101 9.67 5.146 7.191a10.628 10.628 0 0 1-1.005-1.384c2.34 2.142 6.038 4.83 7.365 5.576C8.69 8.408 6.208 4.743 6.324 4.86c4.436 4.47 8.528 6.996 8.528 6.996.154.085.27.154.36.213.085-.215.16-.437.224-.668.708-2.588-.09-5.548-1.893-7.992z"/></svg>
<span style="left:1848.70px;top:94.00px;font-size:23px;line-height:23px;color:#262626;letter-spacing:0.339px;">City+Country</span>
<div style="left:2028px;top:78px;width:392px;height:54px;background:#d5e4fd;"></div>
<svg style="left:2075.0px;top:94.7px;" width="24" height="21.5" viewBox="2.3 3.3 18.5 16.7"><path fill="#ef7a4a" d="M13.543 3.41c4.114 2.47 6.545 7.162 5.549 11.131-.024.093-.05.181-.076.272l.002.001c2.062 2.538 1.5 5.258 1.236 4.745-1.072-2.086-3.066-1.568-4.088-1.043a6.803 6.803 0 0 1-.281.158l-.02.012-.002.002c-2.115 1.123-4.957 1.205-7.812-.022a12.568 12.568 0 0 1-5.64-4.838c.649.48 1.35.902 2.097 1.252 3.019 1.414 6.051 1.311 8.197-.002C9.651 12.73 7.101 9.67 5.146 7.191a10.628 10.628 0 0 1-1.005-1.384c2.34 2.142 6.038 4.83 7.365 5.576C8.69 8.408 6.208 4.743 6.324 4.86c4.436 4.47 8.528 6.996 8.528 6.996.154.085.27.154.36.213.085-.215.16-.437.224-.668.708-2.588-.09-5.548-1.893-7.992z"/></svg>
<span style="left:2110.00px;top:94.00px;font-size:23px;line-height:23px;color:#2f6de0;letter-spacing:0.008px;">CitiesWithC…riesListView</span>
<svg style="left:2467.0px;top:94.7px;" width="24" height="21.5" viewBox="2.3 3.3 18.5 16.7"><path fill="#ef7a4a" d="M13.543 3.41c4.114 2.47 6.545 7.162 5.549 11.131-.024.093-.05.181-.076.272l.002.001c2.062 2.538 1.5 5.258 1.236 4.745-1.072-2.086-3.066-1.568-4.088-1.043a6.803 6.803 0 0 1-.281.158l-.02.012-.002.002c-2.115 1.123-4.957 1.205-7.812-.022a12.568 12.568 0 0 1-5.64-4.838c.649.48 1.35.902 2.097 1.252 3.019 1.414 6.051 1.311 8.197-.002C9.651 12.73 7.101 9.67 5.146 7.191a10.628 10.628 0 0 1-1.005-1.384c2.34 2.142 6.038 4.83 7.365 5.576C8.69 8.408 6.208 4.743 6.324 4.86c4.436 4.47 8.528 6.996 8.528 6.996.154.085.27.154.36.213.085-.215.16-.437.224-.668.708-2.588-.09-5.548-1.893-7.992z"/></svg>
<span style="left:2502.00px;top:94.00px;font-size:23px;line-height:23px;color:#262626;letter-spacing:0.043px;">CitiesWithC…tViewModel</span>
<div style="left:2810px;top:93px;width:2px;height:24px;background:#e2e2e2;"></div>
<div style="left:2830px;top:78px;width:12px;height:54px;background:linear-gradient(270deg,rgba(0,0,0,.13),rgba(0,0,0,0));"></div>
<div style="left:2842px;top:78px;width:2px;height:54px;background:#c0c0c0;"></div>
<div style="left:2844px;top:78px;width:180px;height:54px;background:#ffffff;"></div>
<svg style="left:2858px;top:90px;" width="30" height="30" viewBox="0 0 30 30"><g fill="none" stroke="#6e6e6e" stroke-width="2.100" stroke-linecap="butt" stroke-linejoin="miter"><path d="M7.200 9H25M19.500 2.800 25.800 9 19.500 15.200"/><path d="M20.900 21H3.500M9 14.800 2.700 21 9 27.200"/></g></svg>
<svg style="left:2904px;top:90px;" width="40" height="30" viewBox="0 0 40 30"><g fill="none" stroke="#6e6e6e" stroke-width="2"><path d="M2.100 2.800h12M2.100 9h16M2.100 15h12M2.100 21h16M2.100 27.100h16"/><rect x="23.100" y="3" width="14" height="23.800"/><rect x="27.100" y="7.300" width="6" height="15.300"/></g></svg>
<div style="left:2960px;top:93px;width:2px;height:24px;background:#e2e2e2;"></div>
<svg style="left:2979px;top:90px;" width="28" height="30" viewBox="0 0 28 30"><g fill="none" stroke="#6e6e6e" stroke-width="2.100"><rect x="2.200" y="3.200" width="23.600" height="23.600" rx="4.500"/><path d="M10 3.200v23.600M13 15h10M18 10v10"/></g></svg>
<div style="left:711px;top:188px;width:2313px;height:2px;background:#e4e4e4;"></div>
<svg style="left:728px;top:147px;" width="26" height="26" viewBox="0 0 30 30"><rect x=".3" y=".3" width="29.400" height="29.400" rx="7" fill="#2f7cf6"/><rect x="3" y="3" width="24" height="24" rx="4.300" fill="none" stroke="#a9cdfe" stroke-width="1.300"/><g stroke="#ffffff" stroke-width="2" stroke-linecap="round" fill="none"><path d="M16.800 8.200 10 20"/><path d="M13.600 8.200 21.500 22"/><path d="M6.700 18.400h9.600M20 18.400h3.300"/><path d="M8.600 21.500l-.5.900"/></g></svg>
<span style="left:765.80px;top:149.00px;font-size:23px;line-height:23px;color:#262626;letter-spacing:0.225px;">CountriesAndCities</span>
<svg style="left:978.5px;top:151.5px;" width="9" height="20" viewBox="0 0 9 20"><path d="M1.500 1.200 6.500 10 1.500 18.800" fill="none" stroke="#7a7a7a" stroke-width="1.800" stroke-linecap="round" stroke-linejoin="round"/></svg>
<svg style="left:1004.5px;top:150px;" width="24.5" height="20" viewBox="0 0 29 24"><path fill="#8e9397" d="M0 4.2C0 1.6 1.5 0 4 0h5.2c1.3 0 2 .3 3 1.1l1.2 1c.7.5 1.2.7 2.2.7H25c2.6 0 4 1.500 4 4V7.300H0Z"/><path fill="#8e9397" d="M0 9.6h29V20c0 2.600-1.500 4-4 4H4c-2.500 0-4-1.400-4-4Z"/></svg>
<span style="left:1041.60px;top:149.00px;font-size:23px;line-height:23px;color:#262626;letter-spacing:0.225px;">CountriesAndCities</span>
<svg style="left:1254.5px;top:151.5px;" width="9" height="20" viewBox="0 0 9 20"><path d="M1.500 1.200 6.500 10 1.500 18.800" fill="none" stroke="#7a7a7a" stroke-width="1.800" stroke-linecap="round" stroke-linejoin="round"/></svg>
<svg style="left:1280.5px;top:150px;" width="24.5" height="20" viewBox="0 0 29 24"><path fill="#8e9397" d="M0 4.2C0 1.6 1.5 0 4 0h5.2c1.3 0 2 .3 3 1.1l1.2 1c.7.5 1.2.7 2.2.7H25c2.6 0 4 1.500 4 4V7.300H0Z"/><path fill="#8e9397" d="M0 9.6h29V20c0 2.600-1.500 4-4 4H4c-2.500 0-4-1.400-4-4Z"/></svg>
<span style="left:1317.80px;top:149.00px;font-size:23px;line-height:23px;color:#262626;letter-spacing:-0.184px;">Views</span>
<svg style="left:1391px;top:151.5px;" width="9" height="20" viewBox="0 0 9 20"><path d="M1.500 1.200 6.500 10 1.500 18.800" fill="none" stroke="#7a7a7a" stroke-width="1.800" stroke-linecap="round" stroke-linejoin="round"/></svg>
<svg style="left:1414.5px;top:149.5px;" width="25" height="22.5" viewBox="2.3 3.3 18.5 16.7"><path fill="#f0703a" d="M13.543 3.41c4.114 2.47 6.545 7.162 5.549 11.131-.024.093-.05.181-.076.272l.002.001c2.062 2.538 1.5 5.258 1.236 4.745-1.072-2.086-3.066-1.568-4.088-1.043a6.803 6.803 0 0 1-.281.158l-.02.012-.002.002c-2.115 1.123-4.957 1.205-7.812-.022a12.568 12.568 0 0 1-5.64-4.838c.649.48 1.35.902 2.097 1.252 3.019 1.414 6.051 1.311 8.197-.002C9.651 12.73 7.101 9.67 5.146 7.191a10.628 10.628 0 0 1-1.005-1.384c2.34 2.142 6.038 4.83 7.365 5.576C8.69 8.408 6.208 4.743 6.324 4.86c4.436 4.47 8.528 6.996 8.528 6.996.154.085.27.154.36.213.085-.215.16-.437.224-.668.708-2.588-.09-5.548-1.893-7.992z"/></svg>
<span style="left:1451.80px;top:149.00px;font-size:23px;line-height:23px;color:#262626;letter-spacing:0.270px;">CitiesWithCountriesListView</span>
<svg style="left:1758.8px;top:151.5px;" width="9" height="20" viewBox="0 0 9 20"><path d="M1.500 1.200 6.500 10 1.500 18.800" fill="none" stroke="#7a7a7a" stroke-width="1.800" stroke-linecap="round" stroke-linejoin="round"/></svg>
<div style="left:1783px;top:146px;width:28px;height:28px;background:#55bdd6;border-radius:6.500px;"></div>
<span style="left:1790.80px;top:151.00px;font-size:20.5px;line-height:20.5px;color:#ffffff;font-weight:700;">P</span>
<span style="left:1822.00px;top:149.00px;font-size:23px;line-height:23px;color:#262626;letter-spacing:0.042px;">body</span>
<div style="left:711px;top:1116px;width:1551px;height:44px;background:#ecf3fe;"></div>
<div style="left:2262px;top:190px;width:30px;height:1643px;background:#fafafa;"></div>
<div style="left:2261px;top:190px;width:2px;height:1643px;background:#ececec;"></div>
<div style="left:2289px;top:190px;width:3px;height:1643px;background:#ebebeb;"></div>
<div style="left:2269px;top:196px;width:16px;height:1197px;background:#7f7f7f;border-radius:8px;"></div>
<div style="left:817px;top:194px;width:14px;height:259.5px;background:#e8e8e8;border-radius:7px;"></div>
<div style="left:817px;top:590px;width:14px;height:875.5px;background:#e8e8e8;border-radius:7px;"></div>
<div style="left:817px;top:854px;width:14px;height:567.5px;background:#d3d3d3;border-radius:7px;"></div>
<div style="left:817px;top:898px;width:14px;height:479.5px;background:#c0c0c0;border-radius:7px;"></div>
<div style="left:817px;top:942px;width:14px;height:347.5px;background:#adadad;border-radius:7px;"></div>
<div style="left:817px;top:986px;width:14px;height:259.5px;background:#9b9b9b;border-radius:7px;"></div>
<div style="left:817px;top:1514px;width:14px;height:127.5px;background:#e8e8e8;border-radius:7px;"></div>
<div style="left:817px;top:1116px;width:14px;height:44px;background:rgba(120,140,170,.35);"></div>
<div style="left:725px;top:632px;width:10px;height:219.5px;background:#b0ccfd;border-radius:5px;border:2px solid #2e72f5;"></div>
<div style="left:725px;top:940px;width:10px;height:43.5px;background:#b0ccfd;border-radius:5px;border:2px solid #2e72f5;"></div>
<div style="left:725px;top:1028px;width:10px;height:43.5px;background:#b0ccfd;border-radius:5px;border:2px solid #2e72f5;"></div>
<div style="left:725px;top:1116px;width:10px;height:43.5px;background:#b0ccfd;border-radius:5px;border:2px solid #2e72f5;"></div>
<span style="right:2217.80px;top:198.00px;font-size:31px;line-height:31px;color:#a4a4a4;letter-spacing:-1.900px;-webkit-text-stroke:.35px;">1</span>
<div style="left:855.3px;top:194.64px;height:44px;line-height:44px;font-family:'Liberation Mono',monospace;font-size:34px;letter-spacing:-0.653px;white-space:pre;-webkit-text-stroke:.3px;"><span style="position:static;display:inline;color:#697785;">//</span></div>
<span style="right:2217.80px;top:242.00px;font-size:31px;line-height:31px;color:#a4a4a4;letter-spacing:-1.900px;-webkit-text-stroke:.35px;">2</span>
<div style="left:855.3px;top:238.64px;height:44px;line-height:44px;font-family:'Liberation Mono',monospace;font-size:34px;letter-spacing:-0.653px;white-space:pre;-webkit-text-stroke:.3px;"><span style="position:static;display:inline;color:#697785;">//  CitiesWithCountriesListView.swift</span></div>
<span style="right:2217.80px;top:286.00px;font-size:31px;line-height:31px;color:#a4a4a4;letter-spacing:-1.900px;-webkit-text-stroke:.35px;">3</span>
<div style="left:855.3px;top:282.64px;height:44px;line-height:44px;font-family:'Liberation Mono',monospace;font-size:34px;letter-spacing:-0.653px;white-space:pre;-webkit-text-stroke:.3px;"><span style="position:static;display:inline;color:#697785;">//  CountriesAndCities</span></div>
<span style="right:2217.80px;top:330.00px;font-size:31px;line-height:31px;color:#a4a4a4;letter-spacing:-1.900px;-webkit-text-stroke:.35px;">4</span>
<div style="left:855.3px;top:326.64px;height:44px;line-height:44px;font-family:'Liberation Mono',monospace;font-size:34px;letter-spacing:-0.653px;white-space:pre;-webkit-text-stroke:.3px;"><span style="position:static;display:inline;color:#697785;">//</span></div>
<span style="right:2217.80px;top:374.00px;font-size:31px;line-height:31px;color:#a4a4a4;letter-spacing:-1.900px;-webkit-text-stroke:.35px;">5</span>
<div style="left:855.3px;top:370.64px;height:44px;line-height:44px;font-family:'Liberation Mono',monospace;font-size:34px;letter-spacing:-0.653px;white-space:pre;-webkit-text-stroke:.3px;"><span style="position:static;display:inline;color:#697785;">//  Created by Russell Gordon on 2024-06-08.</span></div>
<span style="right:2217.80px;top:418.00px;font-size:31px;line-height:31px;color:#a4a4a4;letter-spacing:-1.900px;-webkit-text-stroke:.35px;">6</span>
<div style="left:855.3px;top:414.64px;height:44px;line-height:44px;font-family:'Liberation Mono',monospace;font-size:34px;letter-spacing:-0.653px;white-space:pre;-webkit-text-stroke:.3px;"><span style="position:static;display:inline;color:#697785;">//</span></div>
<span style="right:2217.80px;top:462.00px;font-size:31px;line-height:31px;color:#a4a4a4;letter-spacing:-1.900px;-webkit-text-stroke:.35px;">7</span>
<span style="right:2217.80px;top:508.00px;font-size:31px;line-height:31px;color:#a4a4a4;letter-spacing:-1.900px;-webkit-text-stroke:.35px;">8</span>
<div style="left:855.3px;top:502.64px;height:44px;line-height:44px;font-family:'Liberation Mono',monospace;font-size:34px;letter-spacing:-0.653px;white-space:pre;-webkit-text-stroke:.3px;"><span style="position:static;display:inline;color:#a33b9f;font-weight:700;">import</span><span style="position:static;display:inline;color:#242424;"> SwiftUI</span></div>
<span style="right:2217.80px;top:550.00px;font-size:31px;line-height:31px;color:#a4a4a4;letter-spacing:-1.900px;-webkit-text-stroke:.35px;">9</span>
<span style="right:2217.80px;top:596.00px;font-size:31px;line-height:31px;color:#a4a4a4;letter-spacing:-1.900px;-webkit-text-stroke:.35px;">10</span>
<div style="left:855.3px;top:590.64px;height:44px;line-height:44px;font-family:'Liberation Mono',monospace;font-size:34px;letter-spacing:-0.653px;white-space:pre;-webkit-text-stroke:.3px;"><span style="position:static;display:inline;color:#a33b9f;font-weight:700;">struct</span><span style="position:static;display:inline;color:#242424;"> </span><span style="position:static;display:inline;color:#1f5a8c;">CitiesWithCountriesListView</span><span style="position:static;display:inline;color:#242424;">: </span><span style="position:static;display:inline;color:#4011a6;">View</span><span style="position:static;display:inline;color:#242424;"> {</span></div>
<span style="right:2217.80px;top:638.00px;font-size:31px;line-height:31px;color:#a4a4a4;letter-spacing:-1.900px;-webkit-text-stroke:.35px;">11</span>
<span style="right:2217.80px;top:682.00px;font-size:31px;line-height:31px;color:#a4a4a4;letter-spacing:-1.900px;-webkit-text-stroke:.35px;">12</span>
<div style="left:855.3px;top:678.64px;height:44px;line-height:44px;font-family:'Liberation Mono',monospace;font-size:34px;letter-spacing:-0.653px;white-space:pre;-webkit-text-stroke:.3px;"><span style="position:static;display:inline;color:#697785;">    // </span><span style="position:static;display:inline;color:#57636f;font-weight:700;">MARK: Stored proeprties</span></div>
<span style="right:2217.80px;top:726.00px;font-size:31px;line-height:31px;color:#a4a4a4;letter-spacing:-1.900px;-webkit-text-stroke:.35px;">13</span>
<div style="left:855.3px;top:722.64px;height:44px;line-height:44px;font-family:'Liberation Mono',monospace;font-size:34px;letter-spacing:-0.653px;white-space:pre;-webkit-text-stroke:.3px;"><span style="position:static;display:inline;color:#242424;">    </span><span style="position:static;display:inline;color:#4011a6;">@State</span><span style="position:static;display:inline;color:#242424;"> </span><span style="position:static;display:inline;color:#a33b9f;font-weight:700;">private</span><span style="position:static;display:inline;color:#242424;"> </span><span style="position:static;display:inline;color:#a33b9f;font-weight:700;">var</span><span style="position:static;display:inline;color:#242424;"> </span><span style="position:static;display:inline;color:#2978ae;">viewModel</span><span style="position:static;display:inline;color:#242424;"> = </span><span style="position:static;display:inline;color:#28525a;">CitiesWithCountriesListViewModel</span><span style="position:static;display:inline;color:#242424;">()</span></div>
<span style="right:2217.80px;top:770.00px;font-size:31px;line-height:31px;color:#a4a4a4;letter-spacing:-1.900px;-webkit-text-stroke:.35px;">14</span>
<span style="right:2217.80px;top:814.00px;font-size:31px;line-height:31px;color:#a4a4a4;letter-spacing:-1.900px;-webkit-text-stroke:.35px;">15</span>
<div style="left:855.3px;top:810.64px;height:44px;line-height:44px;font-family:'Liberation Mono',monospace;font-size:34px;letter-spacing:-0.653px;white-space:pre;-webkit-text-stroke:.3px;"><span style="position:static;display:inline;color:#697785;">    // </span><span style="position:static;display:inline;color:#57636f;font-weight:700;">MARK: Computed properties</span></div>
<span style="right:2217.80px;top:858.00px;font-size:31px;line-height:31px;color:#a4a4a4;letter-spacing:-1.900px;-webkit-text-stroke:.35px;">16</span>
<div style="left:855.3px;top:854.64px;height:44px;line-height:44px;font-family:'Liberation Mono',monospace;font-size:34px;letter-spacing:-0.653px;white-space:pre;-webkit-text-stroke:.3px;"><span style="position:static;display:inline;color:#242424;">    </span><span style="position:static;display:inline;color:#a33b9f;font-weight:700;">var</span><span style="position:static;display:inline;color:#242424;"> </span><span style="position:static;display:inline;color:#2978ae;">body</span><span style="position:static;display:inline;color:#242424;">: </span><span style="position:static;display:inline;color:#a33b9f;font-weight:700;">some</span><span style="position:static;display:inline;color:#242424;"> </span><span style="position:static;display:inline;color:#4011a6;">View</span><span style="position:static;display:inline;color:#242424;"> {</span></div>
<span style="right:2217.80px;top:902.00px;font-size:31px;line-height:31px;color:#a4a4a4;letter-spacing:-1.900px;-webkit-text-stroke:.35px;">17</span>
<div style="left:855.3px;top:898.64px;height:44px;line-height:44px;font-family:'Liberation Mono',monospace;font-size:34px;letter-spacing:-0.653px;white-space:pre;-webkit-text-stroke:.3px;"><span style="position:static;display:inline;color:#242424;">        </span><span style="position:static;display:inline;color:#4011a6;">NavigationStack</span><span style="position:static;display:inline;color:#242424;"> {</span></div>
<span style="right:2217.80px;top:946.00px;font-size:31px;line-height:31px;color:#a4a4a4;letter-spacing:-1.900px;-webkit-text-stroke:.35px;">18</span>
<div style="left:855.3px;top:942.64px;height:44px;line-height:44px;font-family:'Liberation Mono',monospace;font-size:34px;letter-spacing:-0.653px;white-space:pre;-webkit-text-stroke:.3px;"><span style="position:static;display:inline;color:#242424;">            </span><span style="position:static;display:inline;color:#4011a6;">List</span><span style="position:static;display:inline;color:#242424;">(</span><span style="position:static;display:inline;color:#3a7880;">viewModel</span><span style="position:static;display:inline;color:#242424;">.</span><span style="position:static;display:inline;color:#3a7880;">cities</span><span style="position:static;display:inline;color:#242424;">) { city </span><span style="position:static;display:inline;color:#a33b9f;font-weight:700;">in</span></div>
<span style="right:2217.80px;top:990.00px;font-size:31px;line-height:31px;color:#a4a4a4;letter-spacing:-1.900px;-webkit-text-stroke:.35px;">19</span>
<div style="left:855.3px;top:986.64px;height:44px;line-height:44px;font-family:'Liberation Mono',monospace;font-size:34px;letter-spacing:-0.653px;white-space:pre;-webkit-text-stroke:.3px;"><span style="position:static;display:inline;color:#242424;">                </span><span style="position:static;display:inline;color:#4011a6;">VStack</span><span style="position:static;display:inline;color:#242424;">(</span><span style="position:static;display:inline;color:#7040b2;">alignment</span><span style="position:static;display:inline;color:#242424;">: .</span><span style="position:static;display:inline;color:#7040b2;">leading</span><span style="position:static;display:inline;color:#242424;">) {</span></div>
<span style="right:2217.80px;top:1034.00px;font-size:31px;line-height:31px;color:#a4a4a4;letter-spacing:-1.900px;-webkit-text-stroke:.35px;">20</span>
<div style="left:855.3px;top:1030.64px;height:44px;line-height:44px;font-family:'Liberation Mono',monospace;font-size:34px;letter-spacing:-0.653px;white-space:pre;-webkit-text-stroke:.3px;"><span style="position:static;display:inline;color:#242424;">                    </span><span style="position:static;display:inline;color:#4011a6;">Text</span><span style="position:static;display:inline;color:#242424;">(city.name)</span></div>
<span style="right:2217.80px;top:1078.00px;font-size:31px;line-height:31px;color:#a4a4a4;letter-spacing:-1.900px;-webkit-text-stroke:.35px;">21</span>
<div style="left:855.3px;top:1074.64px;height:44px;line-height:44px;font-family:'Liberation Mono',monospace;font-size:34px;letter-spacing:-0.653px;white-space:pre;-webkit-text-stroke:.3px;"><span style="position:static;display:inline;color:#242424;">                        .</span><span style="position:static;display:inline;color:#7040b2;">bold</span><span style="position:static;display:inline;color:#242424;">()</span></div>
<span style="right:2217.80px;top:1122.00px;font-size:31px;line-height:31px;color:#1f1f1f;letter-spacing:-1.900px;-webkit-text-stroke:.35px;">22</span>
<div style="left:855.3px;top:1118.64px;height:44px;line-height:44px;font-family:'Liberation Mono',monospace;font-size:34px;letter-spacing:-0.653px;white-space:pre;-webkit-text-stroke:.3px;"><span style="position:static;display:inline;color:#242424;">                    </span><span style="position:static;display:inline;color:#4011a6;">Text</span><span style="position:static;display:inline;color:#242424;">(city.country.</span><span style="position:static;display:inline;color:#7040b2;">name</span><span style="position:static;display:inline;color:#242424;">)</span></div>
<span style="right:2217.80px;top:1166.00px;font-size:31px;line-height:31px;color:#a4a4a4;letter-spacing:-1.900px;-webkit-text-stroke:.35px;">23</span>
<div style="left:855.3px;top:1162.64px;height:44px;line-height:44px;font-family:'Liberation Mono',monospace;font-size:34px;letter-spacing:-0.653px;white-space:pre;-webkit-text-stroke:.3px;"><span style="position:static;display:inline;color:#242424;">                        .</span><span style="position:static;display:inline;color:#7040b2;">font</span><span style="position:static;display:inline;color:#242424;">(.</span><span style="position:static;display:inline;color:#7040b2;">subheadline</span><span style="position:static;display:inline;color:#242424;">)</span></div>
<span style="right:2217.80px;top:1210.00px;font-size:31px;line-height:31px;color:#a4a4a4;letter-spacing:-1.900px;-webkit-text-stroke:.35px;">24</span>
<div style="left:855.3px;top:1206.64px;height:44px;line-height:44px;font-family:'Liberation Mono',monospace;font-size:34px;letter-spacing:-0.653px;white-space:pre;-webkit-text-stroke:.3px;"><span style="position:static;display:inline;color:#242424;">                }</span></div>
<span style="right:2217.80px;top:1254.00px;font-size:31px;line-height:31px;color:#a4a4a4;letter-spacing:-1.900px;-webkit-text-stroke:.35px;">25</span>
<div style="left:855.3px;top:1250.64px;height:44px;line-height:44px;font-family:'Liberation Mono',monospace;font-size:34px;letter-spacing:-0.653px;white-space:pre;-webkit-text-stroke:.3px;"><span style="position:static;display:inline;color:#242424;">            }</span></div>
<span style="right:2217.80px;top:1298.00px;font-size:31px;line-height:31px;color:#a4a4a4;letter-spacing:-1.900px;-webkit-text-stroke:.35px;">26</span>
<div style="left:855.3px;top:1294.64px;height:44px;line-height:44px;font-family:'Liberation Mono',monospace;font-size:34px;letter-spacing:-0.653px;white-space:pre;-webkit-text-stroke:.3px;"><span style="position:static;display:inline;color:#242424;">            .</span><span style="position:static;display:inline;color:#7040b2;">navigationTitle</span><span style="position:static;display:inline;color:#242424;">(</span><span style="position:static;display:inline;color:#ca281f;">&quot;Cities&quot;</span><span style="position:static;display:inline;color:#242424;">)</span></div>
<span style="right:2217.80px;top:1342.00px;font-size:31px;line-height:31px;color:#a4a4a4;letter-spacing:-1.900px;-webkit-text-stroke:.35px;">27</span>
<div style="left:855.3px;top:1338.64px;height:44px;line-height:44px;font-family:'Liberation Mono',monospace;font-size:34px;letter-spacing:-0.653px;white-space:pre;-webkit-text-stroke:.3px;"><span style="position:static;display:inline;color:#242424;">        }</span></div>
<span style="right:2217.80px;top:1388.00px;font-size:31px;line-height:31px;color:#a4a4a4;letter-spacing:-1.900px;-webkit-text-stroke:.35px;">28</span>
<div style="left:855.3px;top:1382.64px;height:44px;line-height:44px;font-family:'Liberation Mono',monospace;font-size:34px;letter-spacing:-0.653px;white-space:pre;-webkit-text-stroke:.3px;"><span style="position:static;display:inline;color:#242424;">    }</span></div>
<span style="right:2217.80px;top:1430.00px;font-size:31px;line-height:31px;color:#a4a4a4;letter-spacing:-1.900px;-webkit-text-stroke:.35px;">29</span>
<div style="left:855.3px;top:1426.64px;height:44px;line-height:44px;font-family:'Liberation Mono',monospace;font-size:34px;letter-spacing:-0.653px;white-space:pre;-webkit-text-stroke:.3px;"><span style="position:static;display:inline;color:#242424;">}</span></div>
<span style="right:2217.80px;top:1476.00px;font-size:31px;line-height:31px;color:#a4a4a4;letter-spacing:-1.900px;-webkit-text-stroke:.35px;">30</span>
<span style="right:2217.80px;top:1520.00px;font-size:31px;line-height:31px;color:#a4a4a4;letter-spacing:-1.900px;-webkit-text-stroke:.35px;">31</span>
<div style="left:855.3px;top:1514.64px;height:44px;line-height:44px;font-family:'Liberation Mono',monospace;font-size:34px;letter-spacing:-0.653px;white-space:pre;-webkit-text-stroke:.3px;"><span style="position:static;display:inline;color:#7040b2;">#Preview</span><span style="position:static;display:inline;color:#242424;"> {</span></div>
<span style="right:2217.80px;top:1564.00px;font-size:31px;line-height:31px;color:#a4a4a4;letter-spacing:-1.900px;-webkit-text-stroke:.35px;">32</span>
<div style="left:855.3px;top:1558.64px;height:44px;line-height:44px;font-family:'Liberation Mono',monospace;font-size:34px;letter-spacing:-0.653px;white-space:pre;-webkit-text-stroke:.3px;"><span style="position:static;display:inline;color:#242424;">    </span><span style="position:static;display:inline;color:#28525a;">CitiesWithCountriesListView</span><span style="position:static;display:inline;color:#242424;">()</span></div>
<span style="right:2217.80px;top:1608.00px;font-size:31px;line-height:31px;color:#a4a4a4;letter-spacing:-1.900px;-webkit-text-stroke:.35px;">33</span>
<div style="left:855.3px;top:1602.64px;height:44px;line-height:44px;font-family:'Liberation Mono',monospace;font-size:34px;letter-spacing:-0.653px;white-space:pre;-webkit-text-stroke:.3px;"><span style="position:static;display:inline;color:#242424;">}</span></div>
<span style="right:2217.80px;top:1652.00px;font-size:31px;line-height:31px;color:#a4a4a4;letter-spacing:-1.900px;-webkit-text-stroke:.35px;">34</span>
<div style="left:2292px;top:190px;width:732px;height:1643px;background:#f2f2f2;"></div>
<div style="left:2317px;top:213.5px;width:63px;height:52.5px;background:#ffffff;border-radius:11px;box-shadow:0 0 1px rgba(0,0,0,.12),0 1.5px 5px rgba(0,0,0,.13);"></div>
<svg style="left:2337px;top:224px;" width="24" height="32" viewBox="0 0 24 32"><g fill="none" stroke="#3d3d3d" stroke-width="2" stroke-linejoin="round" stroke-linecap="round"><path d="M3.200 1.800H19.200L15.400 5.400 15.800 12.600C18.500 13.600 20.300 16.400 20.400 19.600Q20.400 20.900 19.200 20.900H2.800Q1.500 20.900 1.500 19.600C1.600 16.400 3.400 13.600 6.200 12.600L6.900 5.400Z"/><path d="M6.200 12.600Q11 11.200 15.800 12.600"/><path d="M10.950 21.500V30.300"/></g></svg>
<div style="left:2400px;top:213.5px;width:366px;height:52.5px;background:#cfdffd;border-radius:11px;box-shadow:0 0 1px rgba(0,0,0,.10),0 1.5px 5px rgba(0,0,0,.12);"></div>
<svg style="left:2417px;top:226px;" width="25" height="26" viewBox="0 0 25 26"><g fill="none" stroke="#2e73ef" stroke-width="2.100" stroke-linecap="round"><path d="M6.200 1.600h11.600M3.800 4.700h16.400"/><rect x="2" y="8.100" width="20" height="15.700" rx="3.300"/></g></svg>
<span style="left:2453.00px;top:229.00px;font-size:23.5px;line-height:23.5px;color:#2e73ef;letter-spacing:0.053px;">CitiesWithCountriesListView</span>
<div style="left:2333px;top:587px;width:10px;height:47px;background:#2b2b2b;border-radius:3px 0 0 3px;"></div>
<div style="left:2333px;top:679px;width:10px;height:92px;background:#2b2b2b;border-radius:3px 0 0 3px;"></div>
<div style="left:2333px;top:796px;width:10px;height:93px;background:#2b2b2b;border-radius:3px 0 0 3px;"></div>
<div style="left:2974px;top:740px;width:9px;height:147px;background:#2b2b2b;border-radius:0 3px 3px 0;"></div>
<svg style="left:2341px;top:348px;" width="635" height="1325" viewBox="0 0 635 1325"><path d="M169.68 0.00L465.32 0.00C514.18 0.00 538.61 0.00 564.90 8.32C593.62 18.77 616.23 41.38 626.68 70.10C635.00 96.39 635.00 120.82 635.00 169.68L635.00 1155.32C635.00 1204.18 635.00 1228.61 626.68 1254.90C616.23 1283.62 593.62 1306.23 564.90 1316.68C538.61 1325.00 514.18 1325.00 465.32 1325.00L169.68 1325.00C120.82 1325.00 96.39 1325.00 70.10 1316.68C41.38 1306.23 18.77 1283.62 8.32 1254.90C0.00 1228.61 0.00 1204.18 0.00 1155.32L0.00 169.68C0.00 120.82 0.00 96.39 8.32 70.10C18.77 41.38 41.38 18.77 70.10 8.32C96.39 0.00 120.82 0.00 169.68 0.00Z" fill="#2e2e2e"/><rect x="0" y="141" width="8" height="8" fill="#252525"/><rect x="627" y="141" width="8" height="8" fill="#252525"/><rect x="0" y="1180" width="8" height="8" fill="#252525"/><rect x="627" y="1180" width="8" height="8" fill="#252525"/><rect x="495" y="0" width="8" height="8" fill="#252525"/><rect x="135" y="1317" width="8" height="8" fill="#252525"/><path d="M165.45 8.00L469.55 8.00C514.89 8.00 537.55 8.00 561.96 15.72C588.60 25.41 609.59 46.40 619.28 73.04C627.00 97.45 627.00 120.11 627.00 165.45L627.00 1159.55C627.00 1204.89 627.00 1227.55 619.28 1251.96C609.59 1278.60 588.60 1299.59 561.96 1309.28C537.55 1317.00 514.89 1317.00 469.55 1317.00L165.45 1317.00C120.11 1317.00 97.45 1317.00 73.04 1309.28C46.40 1299.59 25.41 1278.60 15.72 1251.96C8.00 1227.55 8.00 1204.89 8.00 1159.55L8.00 165.45C8.00 120.11 8.00 97.45 15.72 73.04C25.41 46.40 46.40 25.41 73.04 15.72C97.45 8.00 120.11 8.00 165.45 8.00Z" fill="#000"/><clipPath id="scr"><path d="M157.52 23.00L477.48 23.00C516.21 23.00 535.58 23.00 556.43 29.59C579.19 37.88 597.12 55.81 605.41 78.57C612.00 99.42 612.00 118.79 612.00 157.52L612.00 1168.48C612.00 1207.21 612.00 1226.58 605.41 1247.43C597.12 1270.19 579.19 1288.12 556.43 1296.41C535.58 1303.00 516.21 1303.00 477.48 1303.00L157.52 1303.00C118.79 1303.00 99.42 1303.00 78.57 1296.41C55.81 1288.12 37.88 1270.19 29.59 1247.43C23.00 1226.58 23.00 1207.21 23.00 1168.48L23.00 157.52C23.00 118.79 23.00 99.42 29.59 78.57C37.88 55.81 55.81 37.88 78.57 29.59C99.42 23.00 118.79 23.00 157.52 23.00Z"/></clipPath><g clip-path="url(#scr)"><rect x="23" y="23" width="589" height="1280" fill="#f2f2f7"/><rect x="53" y="249" width="529" height="1100" rx="15" fill="#fff"/><rect x="83" y="342" width="499" height="1.2" fill="#e0e0e3"/><rect x="83" y="436" width="499" height="1.2" fill="#e0e0e3"/><rect x="83" y="530" width="499" height="1.2" fill="#e0e0e3"/><rect x="83" y="624" width="499" height="1.2" fill="#e0e0e3"/><rect x="83" y="718" width="499" height="1.2" fill="#e0e0e3"/><rect x="83" y="812" width="499" height="1.2" fill="#e0e0e3"/><rect x="83" y="906" width="499" height="1.2" fill="#e0e0e3"/><rect x="83" y="1000" width="499" height="1.2" fill="#e0e0e3"/><rect x="83" y="1094" width="499" height="1.2" fill="#e0e0e3"/><rect x="83" y="1188" width="499" height="1.2" fill="#e0e0e3"/><rect x="83" y="1282" width="499" height="1.2" fill="#e0e0e3"/></g></svg>
<div style="left:2564px;top:388.5px;width:188px;height:55.5px;background:#000000;border-radius:28px;"></div>
<span style="left:2389.70px;top:527.00px;font-size:53px;line-height:53px;color:#000000;letter-spacing:-2.085px;font-weight:700;">Cities</span>
<span style="left:2424.70px;top:615.00px;font-size:26px;line-height:26px;color:#000000;letter-spacing:-0.876px;font-weight:700;">Toronto</span>
<span style="left:2424.70px;top:650.00px;font-size:23.5px;line-height:23.5px;color:#111111;letter-spacing:-1.124px;">Canada</span>
<span style="left:2424.70px;top:709.00px;font-size:26px;line-height:26px;color:#000000;letter-spacing:-0.776px;font-weight:700;">Vancouver</span>
<span style="left:2424.70px;top:744.00px;font-size:23.5px;line-height:23.5px;color:#111111;letter-spacing:-1.124px;">Canada</span>
<span style="left:2424.70px;top:803.00px;font-size:26px;line-height:26px;color:#000000;letter-spacing:-0.684px;font-weight:700;">New York</span>
<span style="left:2424.70px;top:838.00px;font-size:23.5px;line-height:23.5px;color:#111111;letter-spacing:-0.290px;">United States</span>
<span style="left:2424.70px;top:897.00px;font-size:26px;line-height:26px;color:#000000;letter-spacing:-1.033px;font-weight:700;">Los Angeles</span>
<span style="left:2424.70px;top:932.00px;font-size:23.5px;line-height:23.5px;color:#111111;letter-spacing:-0.290px;">United States</span>
<span style="left:2424.70px;top:991.00px;font-size:26px;line-height:26px;color:#000000;letter-spacing:-1.279px;font-weight:700;">Beijing</span>
<span style="left:2424.70px;top:1026.00px;font-size:23.5px;line-height:23.5px;color:#111111;letter-spacing:-1.025px;">China</span>
<span style="left:2424.70px;top:1085.00px;font-size:26px;line-height:26px;color:#000000;letter-spacing:-1.016px;font-weight:700;">Shanghai</span>
<span style="left:2424.70px;top:1120.00px;font-size:23.5px;line-height:23.5px;color:#111111;letter-spacing:-1.025px;">China</span>
<span style="left:2424.70px;top:1179.00px;font-size:26px;line-height:26px;color:#000000;letter-spacing:-1.277px;font-weight:700;">Berlin</span>
<span style="left:2424.70px;top:1214.00px;font-size:23.5px;line-height:23.5px;color:#111111;letter-spacing:-0.840px;">Germany</span>
<span style="left:2424.70px;top:1273.00px;font-size:26px;line-height:26px;color:#000000;letter-spacing:-0.998px;font-weight:700;">Munich</span>
<span style="left:2424.70px;top:1308.00px;font-size:23.5px;line-height:23.5px;color:#111111;letter-spacing:-0.840px;">Germany</span>
<span style="left:2424.70px;top:1367.00px;font-size:26px;line-height:26px;color:#000000;letter-spacing:-0.719px;font-weight:700;">Mexico City</span>
<span style="left:2424.70px;top:1402.00px;font-size:23.5px;line-height:23.5px;color:#111111;letter-spacing:-0.527px;">Mexico</span>
<span style="left:2424.70px;top:1461.00px;font-size:26px;line-height:26px;color:#000000;letter-spacing:-0.855px;font-weight:700;">Guadalajara</span>
<span style="left:2424.70px;top:1496.00px;font-size:23.5px;line-height:23.5px;color:#111111;letter-spacing:-0.527px;">Mexico</span>
<span style="left:2424.70px;top:1555.00px;font-size:26px;line-height:26px;color:#000000;letter-spacing:-1.308px;font-weight:700;">Boston</span>
<span style="left:2424.70px;top:1590.00px;font-size:23.5px;line-height:23.5px;color:#111111;letter-spacing:-0.290px;">United States</span>
<div style="left:2317px;top:1756px;width:163px;height:52px;background:#ffffff;border-radius:13px;box-shadow:0 0 1px rgba(0,0,0,.12),0 1.5px 5px rgba(0,0,0,.13);"></div>
<div style="left:2500px;top:1756px;width:63px;height:52px;background:#ffffff;border-radius:13px;box-shadow:0 0 1px rgba(0,0,0,.12),0 1.5px 5px rgba(0,0,0,.13);"></div>
<div style="left:2583px;top:1756px;width:54px;height:52px;background:#ffffff;border-radius:13px;box-shadow:0 0 1px rgba(0,0,0,.12),0 1.5px 5px rgba(0,0,0,.13);"></div>
<div style="left:2792px;top:1756px;width:208px;height:52px;background:#ffffff;border-radius:13px;box-shadow:0 0 1px rgba(0,0,0,.12),0 1.5px 5px rgba(0,0,0,.13);"></div>
<div style="left:2335px;top:1769px;width:26px;height:26px;background:#3478f6;border-radius:50%;"></div>
<svg style="left:2335px;top:1769px;" width="26" height="26" viewBox="0 0 26 26"><path d="M9.800 7.300 19 12.400q.8.600 0 1.200L9.800 18.700q-.9.400-.9-.6V7.900q0-1 .9-.6Z" fill="#fff"/></svg>
<svg style="left:2382px;top:1769px;" width="26" height="26" viewBox="0 0 26 26"><rect x="2.300" y="2.300" width="21.400" height="21.400" rx="3.300" fill="none" stroke="#484848" stroke-width="2.600"/><path d="M9.800 6.300v12.200l3-2.700 2 4.500 2.200-1-2-4.400 4-.2Z" fill="#484848"/></svg>
<svg style="left:2436px;top:1771px;" width="25" height="22" viewBox="0 0 25 22"><g fill="none" stroke="#484848" stroke-width="1.700"><rect x="1.300" y="1.300" width="5" height="7.200" rx="1"/><rect x="10" y="1.300" width="5" height="7.200" rx="1"/><rect x="18.700" y="1.300" width="5" height="7.200" rx="1"/><rect x="1.300" y="13" width="5" height="7.200" rx="1"/><rect x="10" y="13" width="5" height="7.200" rx="1"/><rect x="18.700" y="13" width="5" height="7.200" rx="1"/></g></svg>
<svg style="left:2518px;top:1769px;" width="27" height="27" viewBox="0 0 27 27"><rect x="2" y="2" width="22.600" height="9.600" rx="4.800" fill="none" stroke="#484848" stroke-width="2.300"/><circle cx="7" cy="6.800" r="2.400" fill="#484848"/><rect x="1" y="14.800" width="24.600" height="11.200" rx="5.600" fill="#484848"/><circle cx="20" cy="20.400" r="3" fill="#fff"/></svg>
<svg style="left:2602px;top:1770px;" width="16" height="25" viewBox="0 0 16 25"><rect x="1.200" y="1.200" width="13.600" height="22.300" rx="2.800" fill="#d6d6d6" stroke="#484848" stroke-width="1.800"/><path d="M6 3.800h4M5.300 21h5.400" stroke="#484848" stroke-width="1.300"/></svg>
<svg style="left:2808.4px;top:1766.2px;" width="32" height="32" viewBox="0 0 32 32"><circle cx="13" cy="13" r="9" fill="none" stroke="#484848" stroke-width="3"/><path d="M19.800 19.800l7 7" stroke="#484848" stroke-width="3.600" stroke-linecap="round"/><path d="M9 13h8" stroke="#484848" stroke-width="2"/></svg>
<svg style="left:2856.3px;top:1766.2px;" width="32" height="32" viewBox="0 0 32 32"><circle cx="13" cy="13" r="9" fill="none" stroke="#484848" stroke-width="3"/><path d="M19.800 19.800l7 7" stroke="#484848" stroke-width="3.600" stroke-linecap="round"/><text x="13" y="17.800" text-anchor="middle" font-family="Liberation Sans,sans-serif" font-size="13.500" font-weight="700" fill="#484848">1</text></svg>
<svg style="left:2904.3px;top:1766.2px;" width="32" height="32" viewBox="0 0 32 32"><circle cx="13" cy="13" r="9" fill="none" stroke="#484848" stroke-width="3"/><path d="M19.800 19.800l7 7" stroke="#484848" stroke-width="3.600" stroke-linecap="round"/><rect x="9.600" y="9.600" width="6.800" height="6.800" rx="1.200" fill="none" stroke="#484848" stroke-width="2"/></svg>
<svg style="left:2952.2px;top:1766.2px;" width="32" height="32" viewBox="0 0 32 32"><circle cx="13" cy="13" r="9" fill="none" stroke="#484848" stroke-width="3"/><path d="M19.800 19.800l7 7" stroke="#484848" stroke-width="3.600" stroke-linecap="round"/><path d="M9 13h8M13 9v8" stroke="#484848" stroke-width="2"/></svg>
<div style="left:711px;top:1832px;width:2313px;height:2px;background:#e2e2e2;"></div>
<div style="left:711px;top:1834px;width:2313px;height:54px;background:#ffffff;"></div>
<svg style="left:733px;top:1851px;" width="32" height="20" viewBox="0 0 32 20"><path d="M3.500.8h19.500q1.800 0 2.800 1.500l4 6.200q.9 1.500 0 3L25.800 17.700q-1 1.500-2.800 1.500H3.500q-2.700 0-2.700-2.700v-13Q.8.800 3.500.8Z" fill="#3478f6"/></svg>
<div style="left:779px;top:1849px;width:2px;height:24px;background:#e0e0e0;"></div>
<svg style="left:801px;top:1847px;" width="21" height="28" viewBox="0 0 21 28"><g fill="none" stroke="#767676" stroke-width="1.700"><rect x="1.800" y="1.500" width="4.600" height="25" rx="1.800"/><rect x="13.700" y="1.500" width="4.600" height="25" rx="1.800"/></g></svg>
<svg style="left:857px;top:1850px;" width="29" height="25" viewBox="0 0 29 25"><g fill="none" stroke="#bcbcbc" stroke-width="1.800"><path d="M1.500 14.500 13.500 3l12.500 11.500"/><path d="M26.500 7.500v7.500h-7.500"/><rect x="5.800" y="18" width="16.500" height="5"/></g></svg>
<svg style="left:921px;top:1847px;" width="21" height="28" viewBox="0 0 21 28"><g fill="none" stroke="#bcbcbc" stroke-width="1.800"><path d="M10.500 1v16.500M3.800 11l6.700 6.700 6.700-6.700"/><rect x="1.700" y="21" width="17" height="5"/></g></svg>
<svg style="left:981px;top:1847px;" width="21" height="28" viewBox="0 0 21 28"><g fill="none" stroke="#bcbcbc" stroke-width="1.800"><path d="M10.500 18V1.500M3.800 8l6.700-6.700L17.200 8"/><rect x="1.700" y="21" width="17" height="5"/></g></svg>
<div style="left:1021px;top:1849px;width:2px;height:24px;background:#e0e0e0;"></div>
<svg style="left:1041px;top:1847px;" width="24" height="28" viewBox="0 0 24 28"><g fill="none" stroke="#767676" stroke-width="1.800" stroke-linejoin="round"><path d="M9.500 9.500 22 4.500v17L9.500 26.500Z"/><path d="M5.500 22V7L18 2.200"/><path d="M1.500 19.500V5L13.500.5"/></g></svg>
<svg style="left:1099px;top:1847px;" width="28" height="28" viewBox="0 0 28 28"><g fill="none" stroke="#767676" stroke-width="1.800"><circle cx="5.800" cy="6" r="3.800"/><circle cx="22" cy="14" r="3.800"/><circle cx="5.800" cy="22" r="3.800"/><path d="M9.300 7.700 18.500 12.300M9.300 20.300 18.500 15.700"/></g></svg>
<svg style="left:1161px;top:1847px;" width="24" height="28" viewBox="0 0 24 28"><g fill="none" stroke="#767676" stroke-width="1.800"><rect x="1.500" y="1.500" width="20.500" height="10.500" rx="5.200"/><rect x="1.500" y="15.500" width="20.500" height="10.500" rx="5.200"/></g><circle cx="7" cy="6.800" r="2.600" fill="#767676"/><circle cx="16.500" cy="20.800" r="2.600" fill="#767676"/></svg>
<svg style="left:1220px;top:1847px;" width="28" height="28" viewBox="0 0 28 28"><path d="M1.800 12.200 25.500 1.800 16 25.500 13.800 13.500Z" fill="none" stroke="#767676" stroke-width="1.800" stroke-linejoin="round"/></svg>
<div style="left:1263px;top:1849px;width:2px;height:24px;background:#e0e0e0;"></div>
<svg style="left:1283px;top:1849px;" width="23" height="23" viewBox="0 0 24 24"><rect width="24" height="24" rx="5.28" fill="#818181"/><g stroke="#ffffff" stroke-width="1.7" stroke-linecap="round" fill="none"><path d="M13.4 6.2 L7.6 16"/><path d="M10.8 6.2 L17.6 18"/><path d="M5.3 15.6h8.3M16.3 15.6h2.6"/><path d="M6.6 17.6l-.5 .9"/></g></svg>
<span style="left:1319.60px;top:1850.00px;font-size:23px;line-height:23px;color:#1f1f1f;letter-spacing:0.266px;">CountriesAndCities</span>
<span style="left:2760.70px;top:1850.00px;font-size:23px;line-height:23px;color:#8a8a8a;letter-spacing:0.462px;-webkit-text-stroke:.3px;">Line: 22  Col: 44</span>
<div style="left:2954px;top:1849px;width:2px;height:24px;background:#e0e0e0;"></div>
<svg style="left:2973px;top:1848px;" width="27" height="27" viewBox="0 0 27 27"><rect x="1.500" y="1.500" width="24" height="24" rx="4.500" fill="none" stroke="#767676" stroke-width="1.800"/><rect x="5.500" y="16.500" width="16" height="5.500" rx="1.500" fill="#767676"/></svg>
</div></body></html>
